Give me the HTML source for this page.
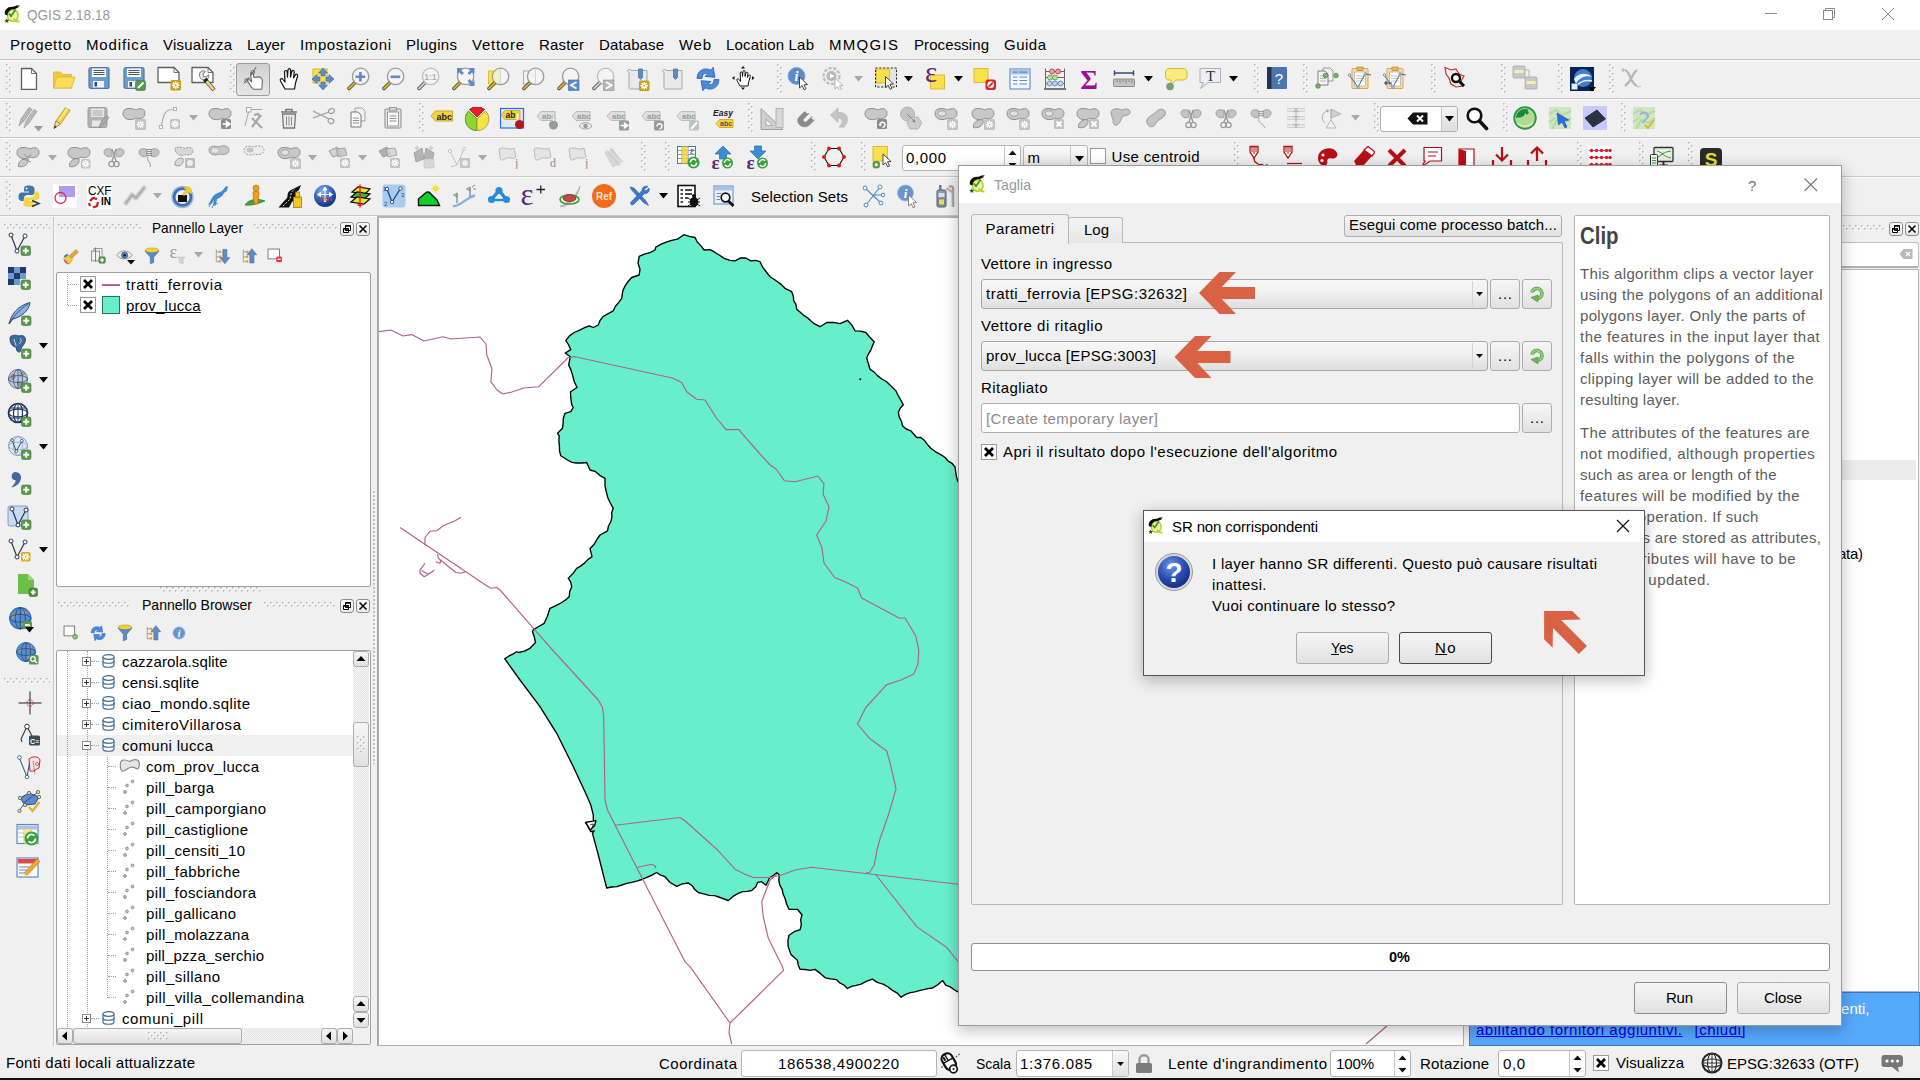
<!DOCTYPE html>
<html><head><meta charset="utf-8"><title>QGIS 2.18.18</title>
<style>
html,body{margin:0;padding:0;}
body{width:1920px;height:1080px;overflow:hidden;background:#f0f0f0;font-family:"Liberation Sans",sans-serif;position:relative;}
div,svg{position:absolute;box-sizing:border-box;}
.t{white-space:nowrap;}
.btn{border:1px solid #adadad;border-radius:3px;background:linear-gradient(#f6f6f6,#e1e1e1);}
.grip{background-image:radial-gradient(circle at 1px 1px,#c4c4c4 0.9px,transparent 1.1px),radial-gradient(circle at 3px 3px,#fff 0.9px,transparent 1.1px);background-size:4px 4px;}
</style></head><body>
<svg width="0" height="0" style="left:0;top:0"><defs><pattern id="gp" width="6" height="6" patternUnits="userSpaceOnUse"><rect x="1" y="1" width="1.500" height="1.500" fill="#fff"/><rect x="0" y="0" width="1.500" height="1.500" fill="#b2b2b2"/><rect x="4" y="4" width="1.500" height="1.500" fill="#fff"/><rect x="3" y="3" width="1.500" height="1.500" fill="#b2b2b2"/></pattern></defs></svg>

<div style="left:0px;top:0px;width:1920px;height:30px;background:#fff;"></div>
<svg style="left:3.5px;top:4.5px" width="16" height="18" viewBox="0 0 16 18"><ellipse cx="8.800" cy="10.500" rx="5.200" ry="5.800" fill="#f0f5a8" stroke="#b9d233" stroke-width="1.700"/><path d="M9.500 13.500 C11 15.500 13 17 15.500 16.500" fill="none" stroke="#b9d233" stroke-width="2"/><path d="M0.800 9.500 C0.300 4.500 4 1.200 9.500 1.800 L12.500 0.500 L15.500 0.300 L14.200 2.600 L10.500 4.300 C6.500 3.800 4 6 3.500 10.500 Z" fill="#0c0c0c"/><path d="M13.200 1 L15.600 0.200 L14.400 2.400 Z" fill="#3da32b"/><path d="M5.200 8.500 L7 11.300 L11.600 4.500" fill="none" stroke="#2e9a22" stroke-width="1.700"/><path d="M2.800 13.300 L3.600 15 L5.500 15.200 L4 16.300 L4.300 18 L2.800 17 L1.200 17.800 L1.700 16.200 L0.300 15.100 L2.100 15 Z" fill="#1d5a1a"/></svg>
<div class="t" style="left:27px;top:5px;font-size:15px;line-height:19px;height:19px;color:#999;transform:scaleX(0.9049);transform-origin:0 0;">QGIS 2.18.18</div>
<svg style="left:1760px;top:5px;" width="140" height="20" viewBox="0 0 140 20">
<path d="M5 8.5 H17" stroke="#8a8a8a" stroke-width="1"/>
<rect x="63.5" y="5.500" width="9" height="9" fill="#fff" stroke="#8a8a8a" stroke-width="1"/>
<path d="M65.5 5.500 V3.500 H74.500 V12.500 H72.500" fill="none" stroke="#8a8a8a" stroke-width="1"/>
<path d="M122 3 L134 15 M134 3 L122 15" stroke="#8a8a8a" stroke-width="1"/>
</svg>
<div style="left:0px;top:30px;width:1920px;height:30px;background:#f0f0f0;border-bottom:1px solid #c2c2c2;"></div>
<div style="left:0px;top:60px;width:1920px;height:1px;background:#fbfbfb;"></div>
<div class="t" style="left:10px;top:35px;font-size:15px;line-height:19px;height:19px;color:#000;letter-spacing:0.614px;">Progetto</div>
<div class="t" style="left:86px;top:35px;font-size:15px;line-height:19px;height:19px;color:#000;letter-spacing:0.878px;">Modifica</div>
<div class="t" style="left:163px;top:35px;font-size:15px;line-height:19px;height:19px;color:#000;letter-spacing:0.193px;">Visualizza</div>
<div class="t" style="left:247px;top:35px;font-size:15px;line-height:19px;height:19px;color:#000;letter-spacing:0.119px;">Layer</div>
<div class="t" style="left:300px;top:35px;font-size:15px;line-height:19px;height:19px;color:#000;letter-spacing:0.618px;">Impostazioni</div>
<div class="t" style="left:406px;top:35px;font-size:15px;line-height:19px;height:19px;color:#000;letter-spacing:0.300px;">Plugins</div>
<div class="t" style="left:472px;top:35px;font-size:15px;line-height:19px;height:19px;color:#000;letter-spacing:0.744px;">Vettore</div>
<div class="t" style="left:539px;top:35px;font-size:15px;line-height:19px;height:19px;color:#000;letter-spacing:0.164px;">Raster</div>
<div class="t" style="left:599px;top:35px;font-size:15px;line-height:19px;height:19px;color:#000;letter-spacing:0.113px;">Database</div>
<div class="t" style="left:679px;top:35px;font-size:15px;line-height:19px;height:19px;color:#000;letter-spacing:0.714px;">Web</div>
<div class="t" style="left:726px;top:35px;font-size:15px;line-height:19px;height:19px;color:#000;letter-spacing:0.190px;">Location Lab</div>
<div class="t" style="left:829px;top:35px;font-size:15px;line-height:19px;height:19px;color:#000;letter-spacing:1.300px;">MMQGIS</div>
<div class="t" style="left:914px;top:35px;font-size:15px;line-height:19px;height:19px;color:#000;letter-spacing:0.089px;">Processing</div>
<div class="t" style="left:1004px;top:35px;font-size:15px;line-height:19px;height:19px;color:#000;letter-spacing:0.493px;">Guida</div>
<div style="left:0px;top:98px;width:1920px;height:2px;background:#fbfbfb;border-top:1px solid #c9c9c9;"></div>
<div style="left:0px;top:137px;width:1920px;height:2px;background:#fbfbfb;border-top:1px solid #c9c9c9;"></div>
<div style="left:0px;top:176px;width:1920px;height:2px;background:#fbfbfb;border-top:1px solid #c9c9c9;"></div>
<div style="left:0px;top:215px;width:1920px;height:2px;background:#fbfbfb;border-top:1px solid #c9c9c9;"></div>
<div style="left:53px;top:217px;width:1px;height:829px;background:#c4c4c4;"></div>
<div style="left:54px;top:217px;width:1px;height:829px;background:#fbfbfb;"></div>
<svg style="left:4px;top:224px" width="46" height="6"><rect width="46" height="6" fill="url(#gp)"/></svg>
<svg style="left:4px;top:678px" width="46" height="6"><rect width="46" height="6" fill="url(#gp)"/></svg>
<svg style="left:58px;top:224px" width="83" height="6"><rect width="83" height="6" fill="url(#gp)"/></svg>
<svg style="left:254px;top:224px" width="83" height="6"><rect width="83" height="6" fill="url(#gp)"/></svg>
<div class="t" style="left:152px;top:218px;font-size:15px;line-height:19px;height:19px;color:#000;transform:scaleX(0.9093);transform-origin:0 0;">Pannello Layer</div>
<div style="left:340px;top:222px;width:14px;height:14px;background:linear-gradient(#fbfbfb,#e8e8e8);border:1px solid #8c8c8c;border-radius:3px;"></div>
<svg style="left:340px;top:222px;" width="14" height="14" viewBox="0 0 14 14"><path d="M5.500 3.500 H10.500 V8.500 H5.500 Z M3.500 6.500 H8.500 V10.500 H3.500 Z" fill="#fff" stroke="#000" stroke-width="1"/><path d="M5.500 4 H10.500 M3.500 7 H8.500" stroke="#000" stroke-width="1.6"/></svg>
<div style="left:356px;top:222px;width:14px;height:14px;background:linear-gradient(#fbfbfb,#e8e8e8);border:1px solid #8c8c8c;border-radius:3px;"></div>
<svg style="left:356px;top:222px;" width="14" height="14" viewBox="0 0 14 14"><path d="M3.500 3.500 L10.500 10.500 M10.500 3.500 L3.500 10.500" stroke="#000" stroke-width="1.500"/></svg>
<div style="left:56px;top:272px;width:315px;height:315px;background:#fff;border:1px solid #a0a0a0;border-radius:2px;"></div>
<div style="left:67px;top:274px;width:1px;height:31px;border-left:1px dotted #a0a0a0;"></div>
<div style="left:68px;top:284px;width:9px;height:1px;border-top:1px dotted #a0a0a0;"></div>
<div style="left:68px;top:305px;width:9px;height:1px;border-top:1px dotted #a0a0a0;"></div>
<div style="left:80px;top:276px;width:16px;height:16px;background:#fff;border:1px solid #9a9a9a;"></div>
<svg style="left:80px;top:276px;" width="16" height="16" viewBox="0 0 16 16"><path d="M4 4 L12 12 M12 4 L4 12" stroke="#000" stroke-width="2.8"/></svg>
<div style="left:80px;top:297px;width:16px;height:16px;background:#fff;border:1px solid #9a9a9a;"></div>
<svg style="left:80px;top:297px;" width="16" height="16" viewBox="0 0 16 16"><path d="M4 4 L12 12 M12 4 L4 12" stroke="#000" stroke-width="2.8"/></svg>
<div style="left:102px;top:284px;width:18px;height:1px;background:#b5638f;height:1.5px;"></div>
<div style="left:102px;top:296px;width:18px;height:18px;background:#67efcb;border:1px solid #27705c;"></div>
<div class="t" style="left:126px;top:275px;font-size:15px;line-height:19px;height:19px;color:#000;letter-spacing:0.605px;">tratti_ferrovia</div>
<div class="t" style="left:126px;top:296px;font-size:15px;line-height:19px;height:19px;color:#000;text-decoration:underline;letter-spacing:0.218px;">prov_lucca</div>
<svg style="left:160px;top:587px" width="102" height="6"><rect width="102" height="6" fill="url(#gp)"/></svg>
<svg style="left:58px;top:602px" width="71" height="6"><rect width="71" height="6" fill="url(#gp)"/></svg>
<svg style="left:264px;top:602px" width="72" height="6"><rect width="72" height="6" fill="url(#gp)"/></svg>
<div class="t" style="left:142px;top:595px;font-size:15px;line-height:19px;height:19px;color:#000;transform:scaleX(0.9357);transform-origin:0 0;">Pannello Browser</div>
<div style="left:340px;top:599px;width:14px;height:14px;background:linear-gradient(#fbfbfb,#e8e8e8);border:1px solid #8c8c8c;border-radius:3px;"></div>
<svg style="left:340px;top:599px;" width="14" height="14" viewBox="0 0 14 14"><path d="M5.500 3.500 H10.500 V8.500 H5.500 Z M3.500 6.500 H8.500 V10.500 H3.500 Z" fill="#fff" stroke="#000" stroke-width="1"/><path d="M5.500 4 H10.500 M3.500 7 H8.500" stroke="#000" stroke-width="1.6"/></svg>
<div style="left:356px;top:599px;width:14px;height:14px;background:linear-gradient(#fbfbfb,#e8e8e8);border:1px solid #8c8c8c;border-radius:3px;"></div>
<svg style="left:356px;top:599px;" width="14" height="14" viewBox="0 0 14 14"><path d="M3.500 3.500 L10.500 10.500 M10.500 3.500 L3.500 10.500" stroke="#000" stroke-width="1.500"/></svg>
<div style="left:56px;top:650px;width:315px;height:395px;background:#fff;border:1px solid #a0a0a0;border-radius:2px;"></div>
<div style="left:57px;top:735px;width:296px;height:21px;background:#f0f0f0;"></div>
<div style="left:67px;top:651px;width:1px;height:378px;border-left:1px dotted #a0a0a0;"></div>
<div style="left:87px;top:651px;width:1px;height:378px;border-left:1px dotted #a0a0a0;"></div>
<div style="left:107px;top:757px;width:1px;height:241px;border-left:1px dotted #a0a0a0;"></div>
<div style="left:91px;top:661px;width:8px;height:1px;border-top:1px dotted #a0a0a0;"></div>
<svg style="left:82px;top:657px;" width="9" height="9" viewBox="0 0 9 9"><rect x="0.500" y="0.500" width="8" height="8" fill="#fff" stroke="#8c8c8c"/><path d="M2 4.500 H7 M4.500 2 V7" stroke="#333" stroke-width="1"/></svg>
<svg style="left:102px;top:654px;" width="13" height="14" viewBox="0 0 13 14"><path d="M1 3 V11 C1 14 12 14 12 11 V3" fill="#fff" stroke="#3f6f96" stroke-width="1.200"/><ellipse cx="6.500" cy="3" rx="5.500" ry="2.300" fill="#fff" stroke="#3f6f96" stroke-width="1.200"/><path d="M1 7 C1 10 12 10 12 7" fill="none" stroke="#3f6f96" stroke-width="1.200"/></svg>
<div class="t" style="left:122px;top:652px;font-size:15px;line-height:19px;height:19px;color:#000;letter-spacing:0.141px;">cazzarola.sqlite</div>
<div style="left:91px;top:682px;width:8px;height:1px;border-top:1px dotted #a0a0a0;"></div>
<svg style="left:82px;top:678px;" width="9" height="9" viewBox="0 0 9 9"><rect x="0.500" y="0.500" width="8" height="8" fill="#fff" stroke="#8c8c8c"/><path d="M2 4.500 H7 M4.500 2 V7" stroke="#333" stroke-width="1"/></svg>
<svg style="left:102px;top:675px;" width="13" height="14" viewBox="0 0 13 14"><path d="M1 3 V11 C1 14 12 14 12 11 V3" fill="#fff" stroke="#3f6f96" stroke-width="1.200"/><ellipse cx="6.500" cy="3" rx="5.500" ry="2.300" fill="#fff" stroke="#3f6f96" stroke-width="1.200"/><path d="M1 7 C1 10 12 10 12 7" fill="none" stroke="#3f6f96" stroke-width="1.200"/></svg>
<div class="t" style="left:122px;top:673px;font-size:15px;line-height:19px;height:19px;color:#000;letter-spacing:0.254px;">censi.sqlite</div>
<div style="left:91px;top:703px;width:8px;height:1px;border-top:1px dotted #a0a0a0;"></div>
<svg style="left:82px;top:699px;" width="9" height="9" viewBox="0 0 9 9"><rect x="0.500" y="0.500" width="8" height="8" fill="#fff" stroke="#8c8c8c"/><path d="M2 4.500 H7 M4.500 2 V7" stroke="#333" stroke-width="1"/></svg>
<svg style="left:102px;top:696px;" width="13" height="14" viewBox="0 0 13 14"><path d="M1 3 V11 C1 14 12 14 12 11 V3" fill="#fff" stroke="#3f6f96" stroke-width="1.200"/><ellipse cx="6.500" cy="3" rx="5.500" ry="2.300" fill="#fff" stroke="#3f6f96" stroke-width="1.200"/><path d="M1 7 C1 10 12 10 12 7" fill="none" stroke="#3f6f96" stroke-width="1.200"/></svg>
<div class="t" style="left:122px;top:694px;font-size:15px;line-height:19px;height:19px;color:#000;letter-spacing:0.443px;">ciao_mondo.sqlite</div>
<div style="left:91px;top:724px;width:8px;height:1px;border-top:1px dotted #a0a0a0;"></div>
<svg style="left:82px;top:720px;" width="9" height="9" viewBox="0 0 9 9"><rect x="0.500" y="0.500" width="8" height="8" fill="#fff" stroke="#8c8c8c"/><path d="M2 4.500 H7 M4.500 2 V7" stroke="#333" stroke-width="1"/></svg>
<svg style="left:102px;top:717px;" width="13" height="14" viewBox="0 0 13 14"><path d="M1 3 V11 C1 14 12 14 12 11 V3" fill="#fff" stroke="#3f6f96" stroke-width="1.200"/><ellipse cx="6.500" cy="3" rx="5.500" ry="2.300" fill="#fff" stroke="#3f6f96" stroke-width="1.200"/><path d="M1 7 C1 10 12 10 12 7" fill="none" stroke="#3f6f96" stroke-width="1.200"/></svg>
<div class="t" style="left:122px;top:715px;font-size:15px;line-height:19px;height:19px;color:#000;letter-spacing:0.577px;">cimiteroVillarosa</div>
<div style="left:91px;top:745px;width:8px;height:1px;border-top:1px dotted #a0a0a0;"></div>
<svg style="left:82px;top:741px;" width="9" height="9" viewBox="0 0 9 9"><rect x="0.500" y="0.500" width="8" height="8" fill="#fff" stroke="#8c8c8c"/><path d="M2 4.500 H7" stroke="#333" stroke-width="1"/></svg>
<svg style="left:102px;top:738px;" width="13" height="14" viewBox="0 0 13 14"><path d="M1 3 V11 C1 14 12 14 12 11 V3" fill="#fff" stroke="#3f6f96" stroke-width="1.200"/><ellipse cx="6.500" cy="3" rx="5.500" ry="2.300" fill="#fff" stroke="#3f6f96" stroke-width="1.200"/><path d="M1 7 C1 10 12 10 12 7" fill="none" stroke="#3f6f96" stroke-width="1.200"/></svg>
<div class="t" style="left:122px;top:736px;font-size:15px;line-height:19px;height:19px;color:#000;letter-spacing:0.315px;">comuni lucca</div>
<div style="left:108px;top:766px;width:8px;height:1px;border-top:1px dotted #a0a0a0;"></div>
<svg style="left:119px;top:758px;" width="22" height="16" viewBox="0 0 22 16"><path d="M1.500 5 C2 1 7 1.500 10.500 3.500 C14 1.500 19 0.500 20 4 C21 8 19.500 11 18 11 C15 8.500 12 8.500 9 10.500 C6 12.500 3.500 14 2.500 12.500 C1 10 1 8 1.500 5 Z" fill="#e6e6e6" stroke="#8a8a8a" stroke-width="1.200"/></svg>
<div class="t" style="left:146px;top:757px;font-size:15px;line-height:19px;height:19px;color:#000;letter-spacing:0.291px;">com_prov_lucca</div>
<div style="left:108px;top:787px;width:8px;height:1px;border-top:1px dotted #a0a0a0;"></div>
<svg style="left:122px;top:779px;" width="14" height="16" viewBox="0 0 14 16"><circle cx="10.500" cy="2.500" r="1.400" fill="#ccc" stroke="#888" stroke-width="0.900"/><circle cx="5" cy="6.500" r="1.400" fill="#ccc" stroke="#888" stroke-width="0.900"/><circle cx="3" cy="13" r="1.400" fill="#ccc" stroke="#888" stroke-width="0.900"/></svg>
<div class="t" style="left:146px;top:778px;font-size:15px;line-height:19px;height:19px;color:#000;letter-spacing:0.328px;">pill_barga</div>
<div style="left:108px;top:808px;width:8px;height:1px;border-top:1px dotted #a0a0a0;"></div>
<svg style="left:122px;top:800px;" width="14" height="16" viewBox="0 0 14 16"><circle cx="10.500" cy="2.500" r="1.400" fill="#ccc" stroke="#888" stroke-width="0.900"/><circle cx="5" cy="6.500" r="1.400" fill="#ccc" stroke="#888" stroke-width="0.900"/><circle cx="3" cy="13" r="1.400" fill="#ccc" stroke="#888" stroke-width="0.900"/></svg>
<div class="t" style="left:146px;top:799px;font-size:15px;line-height:19px;height:19px;color:#000;letter-spacing:0.440px;">pill_camporgiano</div>
<div style="left:108px;top:829px;width:8px;height:1px;border-top:1px dotted #a0a0a0;"></div>
<svg style="left:122px;top:821px;" width="14" height="16" viewBox="0 0 14 16"><circle cx="10.500" cy="2.500" r="1.400" fill="#ccc" stroke="#888" stroke-width="0.900"/><circle cx="5" cy="6.500" r="1.400" fill="#ccc" stroke="#888" stroke-width="0.900"/><circle cx="3" cy="13" r="1.400" fill="#ccc" stroke="#888" stroke-width="0.900"/></svg>
<div class="t" style="left:146px;top:820px;font-size:15px;line-height:19px;height:19px;color:#000;letter-spacing:0.296px;">pill_castiglione</div>
<div style="left:108px;top:850px;width:8px;height:1px;border-top:1px dotted #a0a0a0;"></div>
<svg style="left:122px;top:842px;" width="14" height="16" viewBox="0 0 14 16"><circle cx="10.500" cy="2.500" r="1.400" fill="#ccc" stroke="#888" stroke-width="0.900"/><circle cx="5" cy="6.500" r="1.400" fill="#ccc" stroke="#888" stroke-width="0.900"/><circle cx="3" cy="13" r="1.400" fill="#ccc" stroke="#888" stroke-width="0.900"/></svg>
<div class="t" style="left:146px;top:841px;font-size:15px;line-height:19px;height:19px;color:#000;letter-spacing:0.341px;">pill_censiti_10</div>
<div style="left:108px;top:871px;width:8px;height:1px;border-top:1px dotted #a0a0a0;"></div>
<svg style="left:122px;top:863px;" width="14" height="16" viewBox="0 0 14 16"><circle cx="10.500" cy="2.500" r="1.400" fill="#ccc" stroke="#888" stroke-width="0.900"/><circle cx="5" cy="6.500" r="1.400" fill="#ccc" stroke="#888" stroke-width="0.900"/><circle cx="3" cy="13" r="1.400" fill="#ccc" stroke="#888" stroke-width="0.900"/></svg>
<div class="t" style="left:146px;top:862px;font-size:15px;line-height:19px;height:19px;color:#000;letter-spacing:0.432px;">pill_fabbriche</div>
<div style="left:108px;top:892px;width:8px;height:1px;border-top:1px dotted #a0a0a0;"></div>
<svg style="left:122px;top:884px;" width="14" height="16" viewBox="0 0 14 16"><circle cx="10.500" cy="2.500" r="1.400" fill="#ccc" stroke="#888" stroke-width="0.900"/><circle cx="5" cy="6.500" r="1.400" fill="#ccc" stroke="#888" stroke-width="0.900"/><circle cx="3" cy="13" r="1.400" fill="#ccc" stroke="#888" stroke-width="0.900"/></svg>
<div class="t" style="left:146px;top:883px;font-size:15px;line-height:19px;height:19px;color:#000;letter-spacing:0.385px;">pill_fosciandora</div>
<div style="left:108px;top:913px;width:8px;height:1px;border-top:1px dotted #a0a0a0;"></div>
<svg style="left:122px;top:905px;" width="14" height="16" viewBox="0 0 14 16"><circle cx="10.500" cy="2.500" r="1.400" fill="#ccc" stroke="#888" stroke-width="0.900"/><circle cx="5" cy="6.500" r="1.400" fill="#ccc" stroke="#888" stroke-width="0.900"/><circle cx="3" cy="13" r="1.400" fill="#ccc" stroke="#888" stroke-width="0.900"/></svg>
<div class="t" style="left:146px;top:904px;font-size:15px;line-height:19px;height:19px;color:#000;letter-spacing:0.316px;">pill_gallicano</div>
<div style="left:108px;top:934px;width:8px;height:1px;border-top:1px dotted #a0a0a0;"></div>
<svg style="left:122px;top:926px;" width="14" height="16" viewBox="0 0 14 16"><circle cx="10.500" cy="2.500" r="1.400" fill="#ccc" stroke="#888" stroke-width="0.900"/><circle cx="5" cy="6.500" r="1.400" fill="#ccc" stroke="#888" stroke-width="0.900"/><circle cx="3" cy="13" r="1.400" fill="#ccc" stroke="#888" stroke-width="0.900"/></svg>
<div class="t" style="left:146px;top:925px;font-size:15px;line-height:19px;height:19px;color:#000;letter-spacing:0.291px;">pill_molazzana</div>
<div style="left:108px;top:955px;width:8px;height:1px;border-top:1px dotted #a0a0a0;"></div>
<svg style="left:122px;top:947px;" width="14" height="16" viewBox="0 0 14 16"><circle cx="10.500" cy="2.500" r="1.400" fill="#ccc" stroke="#888" stroke-width="0.900"/><circle cx="5" cy="6.500" r="1.400" fill="#ccc" stroke="#888" stroke-width="0.900"/><circle cx="3" cy="13" r="1.400" fill="#ccc" stroke="#888" stroke-width="0.900"/></svg>
<div class="t" style="left:146px;top:946px;font-size:15px;line-height:19px;height:19px;color:#000;letter-spacing:0.183px;">pill_pzza_serchio</div>
<div style="left:108px;top:976px;width:8px;height:1px;border-top:1px dotted #a0a0a0;"></div>
<svg style="left:122px;top:968px;" width="14" height="16" viewBox="0 0 14 16"><circle cx="10.500" cy="2.500" r="1.400" fill="#ccc" stroke="#888" stroke-width="0.900"/><circle cx="5" cy="6.500" r="1.400" fill="#ccc" stroke="#888" stroke-width="0.900"/><circle cx="3" cy="13" r="1.400" fill="#ccc" stroke="#888" stroke-width="0.900"/></svg>
<div class="t" style="left:146px;top:967px;font-size:15px;line-height:19px;height:19px;color:#000;letter-spacing:0.436px;">pill_sillano</div>
<div style="left:108px;top:997px;width:8px;height:1px;border-top:1px dotted #a0a0a0;"></div>
<svg style="left:122px;top:989px;" width="14" height="16" viewBox="0 0 14 16"><circle cx="10.500" cy="2.500" r="1.400" fill="#ccc" stroke="#888" stroke-width="0.900"/><circle cx="5" cy="6.500" r="1.400" fill="#ccc" stroke="#888" stroke-width="0.900"/><circle cx="3" cy="13" r="1.400" fill="#ccc" stroke="#888" stroke-width="0.900"/></svg>
<div class="t" style="left:146px;top:988px;font-size:15px;line-height:19px;height:19px;color:#000;letter-spacing:0.398px;">pill_villa_collemandina</div>
<div style="left:91px;top:1018px;width:8px;height:1px;border-top:1px dotted #a0a0a0;"></div>
<svg style="left:82px;top:1014px;" width="9" height="9" viewBox="0 0 9 9"><rect x="0.500" y="0.500" width="8" height="8" fill="#fff" stroke="#8c8c8c"/><path d="M2 4.500 H7 M4.500 2 V7" stroke="#333" stroke-width="1"/></svg>
<svg style="left:102px;top:1011px;" width="13" height="14" viewBox="0 0 13 14"><path d="M1 3 V11 C1 14 12 14 12 11 V3" fill="#fff" stroke="#3f6f96" stroke-width="1.200"/><ellipse cx="6.500" cy="3" rx="5.500" ry="2.300" fill="#fff" stroke="#3f6f96" stroke-width="1.200"/><path d="M1 7 C1 10 12 10 12 7" fill="none" stroke="#3f6f96" stroke-width="1.200"/></svg>
<div class="t" style="left:122px;top:1009px;font-size:15px;line-height:19px;height:19px;color:#000;letter-spacing:0.596px;">comuni_pill</div>
<div style="left:353px;top:651px;width:16px;height:345px;background:#e8e8e8;background-image:repeating-conic-gradient(#e2e2e2 0 25%,#f6f6f6 0 50%);background-size:2px 2px;"></div>
<div class="btn" style="left:353px;top:651px;width:16px;height:16px;"></div>
<svg style="left:353px;top:651px;" width="16" height="16" viewBox="0 0 16 16"><path d="M3.500 10 L8 5 L12.500 10 Z" fill="#000"/></svg>
<div class="btn" style="left:353px;top:996px;width:16px;height:16px;"></div>
<svg style="left:353px;top:996px;" width="16" height="16" viewBox="0 0 16 16"><path d="M3.500 10 L8 5 L12.500 10 Z" fill="#000"/></svg>
<div class="btn" style="left:353px;top:1012px;width:16px;height:16px;"></div>
<svg style="left:353px;top:1012px;" width="16" height="16" viewBox="0 0 16 16"><path d="M3.500 6 L8 11 L12.500 6 Z" fill="#000"/></svg>
<div style="left:353px;top:1028px;width:17px;height:16px;background:#f0f0f0;"></div>
<div class="btn" style="left:353px;top:722px;width:16px;height:45px;"></div>
<svg style="left:357px;top:736px" width="8" height="16"><rect width="8" height="16" fill="url(#gp)"/></svg>
<div style="left:57px;top:1028px;width:296px;height:16px;background:#e8e8e8;background-image:repeating-conic-gradient(#e2e2e2 0 25%,#f6f6f6 0 50%);background-size:2px 2px;"></div>
<div class="btn" style="left:57px;top:1028px;width:16px;height:16px;"></div>
<svg style="left:57px;top:1028px;" width="16" height="16" viewBox="0 0 16 16"><path d="M10 3.500 L5 8 L10 12.500 Z" fill="#000"/></svg>
<div class="btn" style="left:321px;top:1028px;width:16px;height:16px;"></div>
<svg style="left:321px;top:1028px;" width="16" height="16" viewBox="0 0 16 16"><path d="M10 3.500 L5 8 L10 12.500 Z" fill="#000"/></svg>
<div class="btn" style="left:337px;top:1028px;width:16px;height:16px;"></div>
<svg style="left:337px;top:1028px;" width="16" height="16" viewBox="0 0 16 16"><path d="M6 3.500 L11 8 L6 12.500 Z" fill="#000"/></svg>
<div class="btn" style="left:73px;top:1028px;width:169px;height:16px;"></div>
<svg style="left:148px;top:1032px" width="20" height="8"><rect width="20" height="8" fill="url(#gp)"/></svg>
<div class="grip" style="left:373px;top:491px;width:3px;height:273px;"></div>
<div style="left:0px;top:1046px;width:1920px;height:32px;background:#f0f0f0;"></div>
<div style="left:0px;top:1078px;width:1920px;height:2px;background:#111;"></div>
<div class="t" style="left:6px;top:1053px;font-size:15px;line-height:19px;height:19px;color:#000;letter-spacing:0.307px;">Fonti dati locali attualizzate</div>
<div class="t" style="left:659px;top:1054px;font-size:15px;line-height:19px;height:19px;color:#000;letter-spacing:0.513px;">Coordinata</div>
<div style="left:741px;top:1050px;width:196px;height:27px;background:#fff;border:1px solid #b4b4b4;border-radius:3px;"></div>
<div class="t" style="left:778px;top:1054px;font-size:15px;line-height:19px;height:19px;color:#000;letter-spacing:0.645px;">186538,4900220</div>
<div class="t" style="left:976px;top:1054px;font-size:15px;line-height:19px;height:19px;color:#000;transform:scaleX(0.9328);transform-origin:0 0;">Scala</div>
<div style="left:1016px;top:1050px;width:113px;height:27px;background:#fff;border:1px solid #b4b4b4;border-radius:3px;"></div>
<div style="left:1112px;top:1051px;width:16px;height:25px;background:linear-gradient(#f8f8f8,#e2e2e2);border-left:1px solid #c8c8c8;border-radius:0 3px 3px 0;"></div>
<div class="t" style="left:1020px;top:1054px;font-size:15px;line-height:19px;height:19px;color:#000;letter-spacing:0.659px;">1:376.085</div>
<svg style="left:1117px;top:1062px;" width="7" height="5" viewBox="0 0 7 5"><path d="M0 0 H7 L3.500 4 Z" fill="#111"/></svg>
<div class="t" style="left:1168px;top:1054px;font-size:15px;line-height:19px;height:19px;color:#000;letter-spacing:0.551px;">Lente d'ingrandimento</div>
<div style="left:1330px;top:1050px;width:81px;height:27px;background:#fff;border:1px solid #b4b4b4;border-radius:3px;"></div>
<div style="left:1394px;top:1051px;width:1px;height:25px;background:#c8c8c8;"></div>
<div class="t" style="left:1336px;top:1054px;font-size:15px;line-height:19px;height:19px;color:#000;letter-spacing:-0.121px;">100%</div>
<svg style="left:1398px;top:1055px;" width="9" height="18" viewBox="0 0 9 18"><path d="M0.500 5 L4.500 0.500 L8.500 5 Z M0.500 13 L4.500 17.500 L8.500 13 Z" fill="#111"/></svg>
<div class="t" style="left:1420px;top:1054px;font-size:15px;line-height:19px;height:19px;color:#000;letter-spacing:0.182px;">Rotazione</div>
<div style="left:1498px;top:1050px;width:88px;height:27px;background:#fff;border:1px solid #b4b4b4;border-radius:3px;"></div>
<div style="left:1569px;top:1051px;width:1px;height:25px;background:#c8c8c8;"></div>
<div class="t" style="left:1503px;top:1054px;font-size:15px;line-height:19px;height:19px;color:#000;letter-spacing:0.574px;">0,0</div>
<svg style="left:1573px;top:1055px;" width="9" height="18" viewBox="0 0 9 18"><path d="M0.500 5 L4.500 0.500 L8.500 5 Z M0.500 13 L4.500 17.500 L8.500 13 Z" fill="#111"/></svg>
<div style="left:1593px;top:1055px;width:16px;height:16px;background:#fff;border:1px solid #9a9a9a;"></div>
<svg style="left:1593px;top:1055px;" width="16" height="16" viewBox="0 0 16 16"><path d="M4 4 L12 12 M12 4 L4 12" stroke="#000" stroke-width="2.8"/></svg>
<div class="t" style="left:1616px;top:1053px;font-size:15px;line-height:19px;height:19px;color:#000;letter-spacing:0.082px;">Visualizza</div>
<div class="t" style="left:1727px;top:1054px;font-size:15px;line-height:19px;height:19px;color:#000;letter-spacing:0.019px;">EPSG:32633 (OTF)</div>
<div style="left:377px;top:216px;width:1087px;height:830px;background:#fff;border:1px solid #b0b0b0;border-top:2px solid #b4b4b4;border-left:2px solid #aaa;"></div>
<svg style="left:379px;top:218px;" width="1084" height="827" viewBox="0 0 1084 827"><polygon points="192.7,186.7 191.8,180.2 191.5,173.7 198.0,169.5 195.2,163.5 193.5,157.0 191.9,151.9 189.7,147.0 191.3,138.7 186.3,135.0 191.8,131.7 189.7,127.0 186.8,122.5 190.5,117.9 195.2,114.5 200.2,112.3 205.1,109.8 210.2,107.8 214.3,109.5 219.3,107.0 221.1,102.3 224.3,98.3 229.3,95.6 234.3,92.8 236.4,88.2 239.8,84.4 242.7,80.3 243.8,72.8 246.1,67.9 249.1,63.5 252.7,59.5 260.2,57.0 261.0,51.2 259.0,45.3 260.2,38.3 265.4,36.1 271.0,34.6 276.0,32.0 276.8,29.2 281.8,26.3 287.2,24.1 292.7,22.3 298.5,21.2 304.8,16.7 310.3,18.3 316.0,19.5 318.4,24.1 322.0,27.9 325.2,32.0 331.0,31.7 335.7,34.2 340.2,37.0 345.2,40.4 351.0,42.3 356.0,42.8 361.8,39.8 366.8,40.0 371.8,42.8 376.5,42.4 381.0,43.7 383.8,49.4 387.7,54.5 391.0,58.7 395.0,61.3 398.9,64.0 402.7,66.9 406.0,70.3 412.7,73.7 414.3,78.0 414.7,82.6 417.0,86.7 417.7,91.2 421.3,94.3 424.9,97.4 428.8,100.0 432.3,103.3 436.0,106.2 441.0,108.7 447.7,104.5 454.4,104.3 461.0,105.7 468.5,102.3 472.9,107.1 476.0,112.8 481.5,113.1 486.8,114.5 490.8,119.3 495.2,123.7 493.4,127.9 491.8,132.1 489.4,136.1 487.7,140.3 489.4,145.7 491.0,151.2 495.2,154.1 498.7,157.9 502.8,161.0 507.3,163.5 511.0,167.0 516.8,172.8 519.2,177.5 521.8,182.1 524.3,186.7 521.2,190.2 519.3,194.5 520.3,199.1 522.5,203.3 523.5,207.8 527.2,211.0 531.8,212.8 537.7,219.5 541.8,219.5 545.6,222.6 548.6,226.6 551.8,230.3 556.6,233.8 561.8,236.6 565.8,239.2 568.9,242.8 573.0,245.3 576.0,249.0 576.7,254.0 577.5,258.9 579.0,263.7 721.0,263.7 721.0,774.0 579.5,774.2 575.3,771.8 571.2,768.9 566.6,767.2 563.8,762.6 558.9,766.6 553.6,770.0 549.1,770.6 544.7,771.7 540.3,772.6 535.9,773.8 531.4,774.6 526.5,776.4 522.1,779.2 518.3,775.2 513.4,772.4 509.1,769.0 504.0,766.1 498.3,764.4 493.4,761.1 487.3,763.4 481.4,766.3 477.0,767.4 472.5,768.3 468.4,770.5 465.1,767.1 460.8,764.9 457.3,761.6 451.7,760.9 446.2,759.8 441.3,755.4 436.0,751.4 431.1,752.3 426.1,751.5 421.2,751.4 419.2,747.0 418.4,742.2 412.0,736.6 409.1,728.3 408.9,722.7 410.0,717.2 415.2,713.7 421.2,711.6 422.3,706.7 421.7,701.7 423.0,696.8 418.4,691.3 410.0,691.3 407.6,686.0 406.0,680.3 404.1,676.0 403.2,671.3 400.8,667.2 399.8,662.1 400.3,657.0 398.0,654.6 394.4,657.3 390.6,659.8 387.0,667.2 382.7,663.7 378.6,664.4 376.8,668.7 372.7,672.5 368.2,673.3 363.6,673.7 359.3,675.3 354.0,678.4 349.3,682.5 341.0,679.5 335.7,677.6 330.1,677.4 324.7,675.9 319.3,674.5 315.8,671.5 313.1,667.7 309.3,665.0 303.3,665.9 297.7,668.3 291.0,664.5 286.0,658.7 281.6,657.2 277.7,654.5 272.9,657.2 267.9,659.3 262.9,661.5 257.7,663.2 252.7,664.4 247.7,665.3 242.8,667.0 237.9,668.6 232.7,669.0 227.7,670.0 219.3,637.0 213.5,615.3 215.2,612.8 211.8,613.7 206.5,604.5 216.0,603.7 214.3,602.0 214.3,597.0 211.8,587.0 206.0,573.7 194.3,548.7 177.7,515.3 161.0,488.7 141.0,462.0 125.7,440.7 129.6,438.2 133.8,436.1 137.7,433.7 139.3,434.5 145.4,433.2 151.0,430.3 156.5,424.5 155.3,419.0 153.5,413.7 154.3,411.7 159.8,408.5 165.2,405.3 168.2,398.7 171.0,390.3 176.9,387.6 182.7,384.5 186.6,381.9 190.2,378.7 190.7,373.5 192.7,368.7 191.7,364.2 189.3,360.3 193.9,355.6 197.7,350.3 201.9,347.9 205.7,344.9 209.1,341.4 213.0,338.7 211.0,330.7 215.2,326.2 217.9,321.5 221.0,317.0 228.5,312.8 229.5,308.0 231.8,303.7 232.9,299.3 232.7,294.6 234.3,290.3 231.0,284.5 228.6,279.2 227.2,273.5 226.0,267.8 226.0,260.3 220.7,257.3 216.0,253.3 211.0,252.0 207.7,244.5 202.7,245.0 197.7,245.0 192.9,244.3 188.5,242.0 181.8,237.8 180.5,232.9 180.4,227.9 179.9,222.9 180.2,217.8 178.5,215.3 183.5,210.3 184.1,205.3 184.3,200.2 186.0,195.3 191.8,193.7 194.3,189.5" fill="#67efcb" stroke="#000" stroke-width="1.350" stroke-linejoin="round"/><polyline points="0.0,113.7 12.0,112.0 24.0,118.0 32.7,116.6 45.0,123.0 64.0,118.7 72.0,121.0 101.0,119.0 107.0,126.0 107.7,136.6 113.0,151.0 111.8,163.7 118.0,172.0 124.0,176.0 132.7,174.0 145.0,170.0 159.8,168.7 189.3,139.5 196.0,138.7 294.3,160.3 302.7,164.5 307.7,173.7 317.7,181.2 326.0,182.0 336.8,199.0 347.0,211.6 359.8,211.6 374.0,228.0 391.0,247.0 397.0,251.0 405.6,262.8 416.0,263.7 439.0,258.0 445.0,265.8 444.0,276.0 450.0,288.7 447.0,303.0 437.7,317.0 443.0,330.0 445.0,345.0 455.6,359.5 466.0,363.7 478.5,370.0 482.7,380.0 520.0,400.0 526.0,400.0 536.8,418.0 539.8,432.0 539.0,446.0 534.8,456.0 522.0,462.0 507.7,466.6 486.8,489.5 478.5,506.0 491.0,520.8 507.7,533.0 511.8,547.8 517.0,570.8 509.8,595.8 501.0,620.8 498.0,632.0 495.3,646.8 490.6,654.2 487.0,655.0" fill="none" stroke="#b0608c" stroke-width="1.150" stroke-linejoin="round"/><polyline points="21.0,309.5 107.7,367.8 111.8,370.3 117.7,369.5 121.0,372.0 155.2,411.2 173.5,432.0 219.3,482.0 223.5,489.5 224.7,498.7 225.2,532.0 226.0,582.0 228.5,592.0 236.0,607.0 257.7,649.5 306.0,743.7 311.0,748.7 351.0,805.0 350.0,814.5 352.7,826.0" fill="none" stroke="#b0608c" stroke-width="1.150" stroke-linejoin="round"/><polyline points="236.0,607.3 301.0,599.5 306.0,602.8 337.7,631.2 356.0,651.2 366.0,656.2 374.3,659.5 391.0,659.5 402.7,657.0 416.0,652.0 432.3,649.2 488.8,655.7 579.5,666.3 721.0,682.0" fill="none" stroke="#b0608c" stroke-width="1.150" stroke-linejoin="round"/><polyline points="497.1,657.0 537.9,708.9 567.5,729.2 579.5,744.0 621.0,792.0" fill="none" stroke="#b0608c" stroke-width="1.150" stroke-linejoin="round"/><polyline points="397.7,656.2 391.0,662.0 382.7,683.7 384.3,698.7 389.3,720.3 403.5,748.7 404.5,752.4 351.0,805.0" fill="none" stroke="#b0608c" stroke-width="1.150" stroke-linejoin="round"/><polyline points="257.7,649.5 272.7,646.2 276.0,647.8 276.8,650.3" fill="none" stroke="#b0608c" stroke-width="1.150" stroke-linejoin="round"/><polyline points="81.8,299.5 76.0,302.8 64.3,307.8 57.7,312.8 51.0,313.3 46.0,319.5 46.0,326.2 47.5,327.5" fill="none" stroke="#b0608c" stroke-width="1.150" stroke-linejoin="round"/><polyline points="58.5,336.2 59.3,340.3 76.8,354.5 81.8,355.3 86.0,354.0" fill="none" stroke="#b0608c" stroke-width="1.150" stroke-linejoin="round"/><polyline points="56.8,343.7 61.0,345.3 61.8,342.0" fill="none" stroke="#b0608c" stroke-width="1.150" stroke-linejoin="round"/><polyline points="46.0,345.3 41.0,352.0 41.0,355.3 45.2,358.7 49.3,356.2 55.2,352.3" fill="none" stroke="#b0608c" stroke-width="1.150" stroke-linejoin="round"/><polyline points="42.5,352.5 49.3,356.2" fill="none" stroke="#b0608c" stroke-width="1.150" stroke-linejoin="round"/><polyline points="1041.0,782.0 1009.0,807.0 987.0,826.0" fill="none" stroke="#b0608c" stroke-width="1.150" stroke-linejoin="round"/><circle cx="481.3" cy="161.2" r="1" fill="#000"/><polygon points="206.8,604.3 217.0,602.6 215.6,607.5 211.3,612.0" fill="#fff" stroke="#000" stroke-width="1.300" stroke-linejoin="round"/><polyline points="211.5,606.5 214.5,606.0 213.0,610.0" fill="none" stroke="#000" stroke-width="0.800"/></svg>
<svg style="left:6px;top:64px" width="6" height="30"><rect width="6" height="30" fill="url(#gp)"/></svg>
<svg style="left:16px;top:66px" width="24" height="24" viewBox="0 0 24 24"><path d="M5.5 2.5 H15.5 L20.5 7.5 V23.5 H5.5 Z" fill="#fff" stroke="#606060" stroke-width="1.300" stroke-linejoin="round"/><path d="M15.5 2.5 V7.5 H20.5" fill="none" stroke="#555" stroke-width="0.800"/></svg>
<svg style="left:51.8px;top:66.5px" width="24" height="24" viewBox="0 0 24 24"><path d="M1.500 5 H8.500 L10.500 7.500 H19.500 V21 H1.500 Z" fill="#f0c93c" stroke="#d9b52a" stroke-width="0.800"/><path d="M1.500 21 L5 10 H23 L19.500 21 Z" fill="#fddc5c" stroke="#d9b52a" stroke-width="0.800"/></svg>
<svg style="left:86.5px;top:66px" width="24" height="24" viewBox="0 0 24 24"><rect x="2" y="1.500" width="20" height="21" rx="2" fill="#6e9bd0" stroke="#4f76a8" stroke-width="1.200"/><rect x="5" y="2.500" width="14" height="8.500" fill="#f6f6f6"/><path d="M6.500 4.500 H17.500 M6.500 6.500 H17.500 M6.500 8.500 H17.500" stroke="#555" stroke-width="1"/><rect x="6" y="15" width="11" height="6.500" fill="#f4f4f4"/><rect x="7.500" y="16" width="2.500" height="4.500" fill="#2c4a78"/></svg>
<svg style="left:121.5px;top:65.5px" width="25" height="25" viewBox="0 0 25 25"><rect x="2" y="1.500" width="20" height="21" rx="2" fill="#6e9bd0" stroke="#4f76a8" stroke-width="1.200"/><rect x="5" y="2.500" width="14" height="8.500" fill="#f6f6f6"/><path d="M6.500 4.500 H17.500 M6.500 6.500 H17.500 M6.500 8.500 H17.500" stroke="#555" stroke-width="1"/><rect x="6" y="15" width="11" height="6.500" fill="#f4f4f4"/><rect x="7.500" y="16" width="2.500" height="4.500" fill="#2c4a78"/><rect x="13.500" y="14.500" width="10" height="10" rx="2" fill="#4f9a4f" stroke="#3b7a3b" stroke-width="0.600"/><path d="M16 22 L21.500 16.500" stroke="#fff" stroke-width="2.200"/></svg>
<svg style="left:156.5px;top:65.5px" width="25" height="25" viewBox="0 0 25 25"><path d="M1 1.5 H17 L22 6.5 V16.5 H1 Z" fill="#fff" stroke="#606060" stroke-width="1.300" stroke-linejoin="round"/><path d="M17 1.5 V6.5 H22" fill="none" stroke="#555" stroke-width="0.800"/><rect x="13.5" y="14" width="10.5" height="10.5" rx="1.500" fill="#c9a21a"/><g transform="translate(18.75 19.25)" stroke="#fff" stroke-width="1.300"><path d="M0 -3.800 V3.800 M-3.800 0 H3.800 M-2.700 -2.700 L2.700 2.700 M-2.700 2.700 L2.700 -2.700"/><circle r="1.300" fill="#c9a21a" stroke="#fff" stroke-width="1"/></g></svg>
<svg style="left:191px;top:65.5px" width="25" height="25" viewBox="0 0 25 25"><path d="M1 1.5 H17 L22 6.5 V16.5 H1 Z" fill="#fff" stroke="#606060" stroke-width="1.300" stroke-linejoin="round"/><path d="M17 1.5 V6.5 H22" fill="none" stroke="#555" stroke-width="0.800"/><g transform="translate(2 2.500)"><path d="M6.500 5.500 C7 2.500 10.500 1.500 12.500 3 L10 5 L10.500 8 L13.500 8.500 L15.500 6 C16.500 9 14.500 11.500 11.500 11.500 C8.500 11.500 6 9 6.500 5.500 Z" fill="#e4e4e4" stroke="#7a7a7a" stroke-width="1"/><path d="M12.500 11.500 L21 21.500" stroke="#6a5a2a" stroke-width="4.200"/><path d="M13.300 12.300 L20.500 21" stroke="#ead488" stroke-width="2.600"/><path d="M11.800 10.600 L13.600 12.800" stroke="#222" stroke-width="4.200"/></g></svg>
<svg style="left:230px;top:64px" width="6" height="30"><rect width="6" height="30" fill="url(#gp)"/></svg>
<div style="left:236px;top:63px;width:34px;height:33px;border:1px solid #9c9c9c;border-radius:3px;background:linear-gradient(#d0d0d0,#e6e6e6);"></div>
<svg style="left:240.5px;top:67px" width="24" height="24" viewBox="0 0 24 24"><g transform="translate(-0.500 -2.500) scale(1.180)"><path d="M9 19 L6 14 C5 12.500 7 11.500 8 13 L9.500 15 L8.500 8 C8.300 6.500 10.300 6.200 10.700 7.800 L11.500 11 L14.500 10.500 C17 10.500 19 12 18.500 15 L18 21 H11 Z" fill="#fff" stroke="#666" stroke-width="0.900"/><path d="M14 1 L9 9 M7 11 L3 16" stroke="#555" stroke-width="0.800"/><circle cx="10.500" cy="6.500" r="1.500" fill="none" stroke="#666" stroke-width="0.700"/><circle cx="5" cy="13.500" r="1.500" fill="none" stroke="#666" stroke-width="0.700"/></g></svg>
<svg style="left:276.5px;top:67px" width="24" height="24" viewBox="0 0 24 24"><path d="M8 22 L3.500 14 C2.500 12 4.500 10.500 6 12.500 L8 15 L7.500 5 C7.500 3 10 3 10.200 5 L10.500 10 L11 3 C11.200 1 13.700 1.200 13.600 3.200 L13.500 10 L14.800 4.500 C15.300 2.800 17.500 3.300 17.200 5.200 L16.500 11 L18.300 8 C19.300 6.500 21.300 7.500 20.500 9.500 L18.500 16 L17.500 22 Z" fill="#fff" stroke="#111" stroke-width="1.200" stroke-linejoin="round"/></svg>
<svg style="left:311px;top:67px" width="24" height="24" viewBox="0 0 24 24"><rect x="2" y="2" width="14" height="14" fill="#fbe04d" stroke="#d9b52a" stroke-width="1"/><g fill="#5b8cc8" stroke="#3b6ca8" stroke-width="0.600"><path d="M12 1 L16.500 6 H14 V9 H10 V6 H7.500 Z"/><path d="M12 23 L16.500 18 H14 V15 H10 V18 H7.500 Z"/><path d="M1 12 L6 7.500 V10 H9 V14 H6 V16.500 Z"/><path d="M23 12 L18 7.500 V10 H15 V14 H18 V16.500 Z"/></g></svg>
<svg style="left:346px;top:67px" width="24" height="24" viewBox="0 0 24 24"><path d="M9.500 15 L3 21.500" stroke="#222" stroke-width="3.400" stroke-linecap="round"/><path d="M8.300 16.200 L3 21.500" stroke="#d9b52a" stroke-width="2.200" stroke-linecap="round"/><circle cx="14.600" cy="9.400" r="8.200" fill="#f4f4f4" stroke="#9a9a9a" stroke-width="1.300"/><path d="M14.400 5 V14.600 M9.600 9.800 H19.200" stroke="#5b8cc8" stroke-width="2.600"/></svg>
<svg style="left:381px;top:67px" width="24" height="24" viewBox="0 0 24 24"><path d="M9.500 15 L3 21.500" stroke="#222" stroke-width="3.400" stroke-linecap="round"/><path d="M8.300 16.200 L3 21.500" stroke="#d9b52a" stroke-width="2.200" stroke-linecap="round"/><circle cx="14.600" cy="9.400" r="8.200" fill="#f4f4f4" stroke="#9a9a9a" stroke-width="1.300"/><path d="M9.600 9.800 H19.200" stroke="#5b8cc8" stroke-width="2.600"/></svg>
<svg style="left:416px;top:67px" width="24" height="24" viewBox="0 0 24 24"><path d="M9.500 15 L3 21.500" stroke="#222" stroke-width="3.400" stroke-linecap="round"/><path d="M8.300 16.200 L3 21.500" stroke="#d0d0d0" stroke-width="2.200" stroke-linecap="round"/><circle cx="14.600" cy="9.400" r="8.200" fill="#f4f4f4" stroke="#bdbdbd" stroke-width="1.300"/><text x="14.400" y="13" text-anchor="middle" font-family="Liberation Sans,sans-serif" font-weight="bold" font-size="8.500" fill="#b0b0b0">1:1</text></svg>
<svg style="left:451px;top:67px" width="24" height="24" viewBox="0 0 24 24"><path d="M9.500 15 L3 21.500" stroke="#222" stroke-width="3.400" stroke-linecap="round"/><path d="M8.300 16.200 L3 21.500" stroke="#d9b52a" stroke-width="2.200" stroke-linecap="round"/><circle cx="14.600" cy="9.400" r="8.200" fill="#f4f4f4" stroke="#9a9a9a" stroke-width="1.300"/><g fill="#5b8cc8"><path d="M6 1 H12 L10 3 L13 6 L11 8 L8 5 L6 7 Z"/><path d="M23.500 1 H17.500 L19.500 3 L16.500 6 L18.500 8 L21.500 5 L23.500 7 Z"/><path d="M23.500 19 H17.500 L19.500 17 L16.500 14 L18.500 12 L21.500 15 L23.500 13 Z"/></g></svg>
<svg style="left:486px;top:67px" width="24" height="24" viewBox="0 0 24 24"><rect x="2.500" y="4" width="10" height="13" fill="#fbe04d" stroke="#d9b52a" stroke-width="0.800"/><path d="M9.500 15 L3 21.500" stroke="#222" stroke-width="3.400" stroke-linecap="round"/><path d="M8.300 16.200 L3 21.500" stroke="#d9b52a" stroke-width="2.200" stroke-linecap="round"/><circle cx="14.600" cy="9.400" r="8.200" fill="#f4f4f4" stroke="#9a9a9a" stroke-width="1.300"/><path d="M14.400 2.500 A7.300 7.300 0 0 0 14.400 17.100 Z" fill="#f4edc4" opacity="0.900"/><path d="M14.400 2.500 V17" stroke="#c8c8c8" stroke-width="0.800"/></svg>
<svg style="left:521px;top:67px" width="24" height="24" viewBox="0 0 24 24"><rect x="2.500" y="4" width="10" height="13" fill="#f2f2f2" stroke="#999" stroke-width="0.800"/><path d="M9.500 15 L3 21.500" stroke="#222" stroke-width="3.400" stroke-linecap="round"/><path d="M8.300 16.200 L3 21.500" stroke="#d9b52a" stroke-width="2.200" stroke-linecap="round"/><circle cx="14.600" cy="9.400" r="8.200" fill="#f4f4f4" stroke="#9a9a9a" stroke-width="1.300"/><path d="M14.400 2.500 V17" stroke="#c8c8c8" stroke-width="0.800"/></svg>
<svg style="left:556px;top:67px" width="24" height="24" viewBox="0 0 24 24"><path d="M9.500 15 L3 21.500" stroke="#222" stroke-width="3.400" stroke-linecap="round"/><path d="M8.300 16.200 L3 21.500" stroke="#d9b52a" stroke-width="2.200" stroke-linecap="round"/><circle cx="14.600" cy="9.400" r="8.200" fill="#f4f4f4" stroke="#9a9a9a" stroke-width="1.300"/><rect x="12.500" y="13" width="10.500" height="10.500" fill="#5b8cc8" stroke="#3b6ca8" stroke-width="0.600"/><path d="M20.500 15 L15 18.300 L20.500 21.600" fill="none" stroke="#fff" stroke-width="1.800"/></svg>
<svg style="left:591px;top:67px" width="24" height="24" viewBox="0 0 24 24"><path d="M9.500 15 L3 21.500" stroke="#222" stroke-width="3.400" stroke-linecap="round"/><path d="M8.300 16.200 L3 21.500" stroke="#d0d0d0" stroke-width="2.200" stroke-linecap="round"/><circle cx="14.600" cy="9.400" r="8.200" fill="#f4f4f4" stroke="#bdbdbd" stroke-width="1.300"/><rect x="12.500" y="13" width="10.500" height="10.500" fill="#b8b8b8" stroke="#909090" stroke-width="0.600"/><path d="M15 15 L20.500 18.300 L15 21.600" fill="none" stroke="#fff" stroke-width="1.800"/></svg>
<svg style="left:625.5px;top:66.5px" width="25" height="25" viewBox="0 0 25 25"><path d="M3 2.500 C1 2.500 1 5 3 5 V21 C3 22 4 22 5 22 H21 V3.500 H5 C5 2 3 2.500 3 2.500 Z" fill="#e9e9e9" stroke="#a8a8a8" stroke-width="1"/><path d="M12.500 2 H16.500 V10.500 L14.500 12.500 L12.500 10.500 Z" fill="#5b8cc8" stroke="#3b6ca8" stroke-width="0.700"/><rect x="13" y="13.5" width="10.5" height="10.5" rx="1.500" fill="#c9a21a"/><g transform="translate(18.25 18.75)" stroke="#fff" stroke-width="1.300"><path d="M0 -3.800 V3.800 M-3.800 0 H3.800 M-2.700 -2.700 L2.700 2.700 M-2.700 2.700 L2.700 -2.700"/><circle r="1.300" fill="#c9a21a" stroke="#fff" stroke-width="1"/></g></svg>
<svg style="left:661px;top:67px" width="24" height="24" viewBox="0 0 24 24"><path d="M3 2.500 C1 2.500 1 5 3 5 V21 C3 22 4 22 5 22 H21 V3.500 H5 C5 2 3 2.500 3 2.500 Z" fill="#e9e9e9" stroke="#a8a8a8" stroke-width="1"/><path d="M12.500 2 H16.500 V10.500 L14.500 12.500 L12.500 10.500 Z" fill="#5b8cc8" stroke="#3b6ca8" stroke-width="0.700"/></svg>
<svg style="left:696px;top:66.5px" width="24" height="24" viewBox="0 0 24 24"><g transform="translate(-1.800 -1.800) scale(1.150)"><path d="M2.500 11.500 C2.500 4.500 9 1.500 14.500 4.300 L16.500 1.800 L18 10.500 L9.300 9.800 L11.800 7.600 C9 6.300 6.800 8 6.800 11.500 Z" fill="#4a8ad8" stroke="#2f68b8" stroke-width="0.800"/><path d="M21.500 12.500 C21.500 19.500 15 22.500 9.500 19.700 L7.500 22.200 L6 13.500 L14.700 14.200 L12.200 16.400 C15 17.700 17.200 16 17.200 12.500 Z" fill="#4a8ad8" stroke="#2f68b8" stroke-width="0.800"/></g></svg>
<svg style="left:731px;top:66px" width="24" height="24" viewBox="0 0 24 24"><path d="M9 20 L6 14.500 C5.200 13 7 12 8 13.500 L9.500 15.500 L9.200 7 C9.200 5.500 11.200 5.500 11.300 7 L11.500 10.500 L12 5.500 C12.200 4 14.200 4.200 14.100 5.700 L14 10.500 L15 7 C15.500 5.700 17.300 6.200 17 7.700 L16.300 11.500 L17.500 9.500 C18.300 8.300 20 9.300 19.300 10.700 L17.800 15.500 L17 20 Z" fill="#fff" stroke="#111" stroke-width="1" stroke-linejoin="round"/><path d="M12 0 L14 2.500 H10 Z M12 24 L14 21.500 H10 Z M1 12 L3.500 10 V14 Z M23.500 12 L21 10 V14 Z" fill="#111"/></svg>
<svg style="left:777px;top:64px" width="6" height="30"><rect width="6" height="30" fill="url(#gp)"/></svg>
<svg style="left:787px;top:66px" width="24" height="24" viewBox="0 0 24 24"><circle cx="9.500" cy="10" r="8.500" fill="#5b8cc8" stroke="#7fa6d8" stroke-width="0.800"/><text x="9.500" y="15" text-anchor="middle" font-family="Liberation Serif,serif" font-style="italic" font-weight="bold" font-size="14" fill="#fff">i</text><path d="M12.5 11 l0 11 l2.600 -2.400 l2 4.200 l1.900 -0.900 l-2 -4.100 l3.500 -0.300 Z" fill="#fff" stroke="#333" stroke-width="0.900"/></svg>
<svg style="left:822px;top:66px" width="24" height="24" viewBox="0 0 24 24"><circle cx="9.500" cy="10" r="8" fill="#ececec" stroke="#bdbdbd" stroke-width="2.200" stroke-dasharray="3.200 1.700"/><circle cx="9.500" cy="10" r="5" fill="#b9b9b9"/><path d="M8 7.500 L12.500 10 L8 12.500 Z" fill="#fff"/><path d="M13 12 l0 11 l2.600 -2.400 l2 4.200 l1.900 -0.900 l-2 -4.100 l3.500 -0.300 Z" fill="#fff" stroke="#aaa" stroke-width="0.900"/></svg>
<svg style="left:854px;top:75.5px" width="9" height="6"><path d="M0 0 H9 L4.500 5.500 Z" fill="#a8a8a8"/></svg>
<svg style="left:874px;top:66px" width="24" height="24" viewBox="0 0 24 24"><rect x="1.500" y="2" width="21" height="19" fill="#e4e4e4" stroke="#222" stroke-width="1" stroke-dasharray="2.200 1.600"/><rect x="2.500" y="3" width="13" height="14" fill="#fbe04d" stroke="#d9b52a" stroke-width="0.800"/><path d="M11.5 10.5 l0 11 l2.600 -2.400 l2 4.200 l1.900 -0.900 l-2 -4.100 l3.500 -0.300 Z" fill="#fff" stroke="#333" stroke-width="0.900"/></svg>
<svg style="left:904px;top:75.5px" width="9" height="6"><path d="M0 0 H9 L4.500 5.500 Z" fill="#000"/></svg>
<svg style="left:923px;top:66px" width="24" height="24" viewBox="0 0 24 24"><rect x="7.500" y="9" width="14" height="14" fill="#fbe04d" stroke="#d9b52a" stroke-width="0.900"/><text x="2" y="16" font-family="Liberation Serif,serif" font-size="29" fill="#5a2a78">ε</text></svg>
<svg style="left:954px;top:75.5px" width="9" height="6"><path d="M0 0 H9 L4.500 5.500 Z" fill="#000"/></svg>
<svg style="left:973px;top:67px" width="24" height="24" viewBox="0 0 24 24"><rect x="1" y="1.500" width="14" height="14" fill="#fbe04d" stroke="#d9b52a" stroke-width="0.900"/><rect x="12.500" y="12.500" width="10.500" height="10.500" rx="2.500" fill="#d0262b"/><circle cx="17.700" cy="17.700" r="3.200" fill="#fff" stroke="#fff" stroke-width="0.500"/><path d="M15.600 19.800 L19.800 15.600" stroke="#d0262b" stroke-width="1.700"/></svg>
<svg style="left:1008px;top:67px" width="24" height="24" viewBox="0 0 24 24"><rect x="2" y="2" width="20" height="20" fill="#f4f8fd" stroke="#5b8cc8" stroke-width="1.100"/><rect x="3" y="3" width="18" height="4.500" fill="#a9c4e6"/><path d="M5 5.200 H9.500 M11.500 5.200 H19 M5 10 H9.500 M11.500 10 H19 M5 13.500 H9.500 M11.500 13.500 H19 M5 17 H9.500 M11.500 17 H19" stroke="#5b8cc8" stroke-width="1.200"/></svg>
<svg style="left:1042.5px;top:67px" width="24" height="24" viewBox="0 0 24 24"><path d="M2.500 1.500 V21 M21.500 1.500 V21 M2.500 4.500 H21.500 M2.500 10.500 H21.500 M2.500 16.500 H21.500" stroke="#666" stroke-width="1"/><rect x="1" y="21" width="22" height="2" fill="#777"/><g stroke-width="0.800"><circle cx="9" cy="4.500" r="2.500" fill="#f0a0a0" stroke="#c03030"/><circle cx="15" cy="4.500" r="2.500" fill="#f0a0a0" stroke="#c03030"/><circle cx="7" cy="10.500" r="2.500" fill="#b4e0a8" stroke="#4a9a3a"/><circle cx="12" cy="10.500" r="2.500" fill="#b4e0a8" stroke="#4a9a3a"/><circle cx="6.500" cy="16.500" r="2.500" fill="#b8d4f0" stroke="#4a7ebb"/><circle cx="12" cy="16.500" r="2.500" fill="#b8d4f0" stroke="#4a7ebb"/><circle cx="17.500" cy="16.500" r="2.500" fill="#b8d4f0" stroke="#4a7ebb"/></g></svg>
<svg style="left:1077px;top:67px" width="24" height="24" viewBox="0 0 24 24"><text x="12" y="22" text-anchor="middle" font-family="Liberation Serif,serif" font-weight="bold" font-size="27" fill="#9a0f9a">Σ</text></svg>
<svg style="left:1112px;top:67px" width="24" height="24" viewBox="0 0 24 24"><path d="M2.500 6 H21.500 M2.500 3.500 V8.500 M21.500 3.500 V8.500" stroke="#2e4d78" stroke-width="1.500"/><rect x="1.500" y="12" width="21" height="7.500" rx="1" fill="#c4c4c4" stroke="#8a8a8a" stroke-width="1"/><path d="M5 12.500 V15 M8 12.500 V16.500 M11 12.500 V15 M14 12.500 V16.500 M17 12.500 V15 M20 12.500 V16.500" stroke="#777" stroke-width="0.800"/></svg>
<svg style="left:1143.5px;top:75.5px" width="9" height="6"><path d="M0 0 H9 L4.500 5.500 Z" fill="#000"/></svg>
<svg style="left:1163.5px;top:67px" width="24" height="24" viewBox="0 0 24 24"><path d="M5 1.500 H19 C22 1.500 23 3.500 23 6 V9 C23 12 21 13 19 13 H12 L7 18 V13 H5 C2 13 1.500 11 1.500 9 V6 C1.500 3 3 1.500 5 1.500 Z" fill="#fbea7c" stroke="#d8b830" stroke-width="1"/><circle cx="6" cy="19.500" r="3.500" fill="#6aa86a" stroke="#8a8a8a" stroke-width="0.800"/></svg>
<svg style="left:1198px;top:67px" width="24" height="24" viewBox="0 0 24 24"><path d="M2 1.500 H22.500 V15.500 H10 L2.500 21.500 L5.500 15.500 H2 Z" fill="#eaf0f6" stroke="#a8a8a8" stroke-width="0.900"/><text x="12.500" y="13.500" text-anchor="middle" font-family="Liberation Serif,serif" font-size="15" fill="#333">T</text></svg>
<svg style="left:1229px;top:75.5px" width="9" height="6"><path d="M0 0 H9 L4.500 5.500 Z" fill="#000"/></svg>
<svg style="left:1254px;top:64px" width="6" height="30"><rect width="6" height="30" fill="url(#gp)"/></svg>
<svg style="left:1265px;top:66px" width="24" height="24" viewBox="0 0 24 24"><rect x="2" y="1" width="20" height="22" rx="1" fill="#4a76ad"/><rect x="2" y="1" width="4.500" height="22" fill="#23344d"/><text x="14" y="18" text-anchor="middle" font-family="Liberation Sans,sans-serif" font-size="15" fill="#fff">?</text></svg>
<svg style="left:1303px;top:64px" width="6" height="30"><rect width="6" height="30" fill="url(#gp)"/></svg>
<svg style="left:1314px;top:65px" width="26" height="26" viewBox="0 0 26 26"><path d="M9 3 H16 L19 6 V16 H9 Z" fill="#f0f0f0" stroke="#888" stroke-width="0.800"/><path d="M4 6 H11 L14 9 V20 H4 Z" fill="#f6f6f6" stroke="#666" stroke-width="0.800"/><path d="M6 11 H12 M6 13.500 H12 M6 16 H12" stroke="#999" stroke-width="0.700"/><circle cx="11.500" cy="10.500" r="2.300" fill="#7ab36a" stroke="#4a7a3a" stroke-width="0.700"/><circle cx="22" cy="10.500" r="2.300" fill="#7ab36a" stroke="#4a7a3a" stroke-width="0.700"/><circle cx="4" cy="21" r="2.300" fill="#7ab36a" stroke="#4a7a3a" stroke-width="0.700"/></svg>
<svg style="left:1348px;top:66px" width="24" height="24" viewBox="0 0 24 24"><rect x="4" y="2.500" width="16" height="20" rx="1" fill="#f8dcb0" stroke="#d9a44a" stroke-width="1"/><rect x="6.500" y="6" width="11" height="14" fill="#fff" stroke="#999" stroke-width="0.600"/><rect x="9" y="1" width="6" height="3.500" fill="#e8b868" stroke="#b88428" stroke-width="0.700"/><path d="M8 10 H16 M8 12.500 H16 M8 15 H16" stroke="#aaa" stroke-width="0.700"/><path d="M1 9 L10 21 L17 8 L23 9" fill="none" stroke="#3b6ca8" stroke-width="1"/><circle cx="1.500" cy="9" r="1.200" fill="#fff" stroke="#3b6ca8" stroke-width="0.700"/><circle cx="10" cy="21" r="1.200" fill="#fff" stroke="#3b6ca8" stroke-width="0.700"/><circle cx="17" cy="8" r="1.200" fill="#fff" stroke="#3b6ca8" stroke-width="0.700"/></svg>
<svg style="left:1383px;top:66px" width="24" height="24" viewBox="0 0 24 24"><rect x="4" y="2.500" width="16" height="20" rx="1" fill="#f8dcb0" stroke="#d9a44a" stroke-width="1"/><rect x="6.500" y="6" width="11" height="14" fill="#fff" stroke="#999" stroke-width="0.600"/><rect x="9" y="1" width="6" height="3.500" fill="#e8b868" stroke="#b88428" stroke-width="0.700"/><path d="M8 10 H16 M8 12.500 H16 M8 15 H16" stroke="#aaa" stroke-width="0.700"/><path d="M1 9 L10 21 L17 8 L23 9" fill="none" stroke="#3b6ca8" stroke-width="1"/><circle cx="1.500" cy="9" r="1.200" fill="#fff" stroke="#3b6ca8" stroke-width="0.700"/><circle cx="10" cy="21" r="1.200" fill="#fff" stroke="#3b6ca8" stroke-width="0.700"/><circle cx="17" cy="8" r="1.200" fill="#fff" stroke="#3b6ca8" stroke-width="0.700"/><path d="M1 17 H9 M3 15 V19" stroke="#444" stroke-width="1.200"/></svg>
<svg style="left:1431px;top:64px" width="6" height="30"><rect width="6" height="30" fill="url(#gp)"/></svg>
<svg style="left:1443px;top:66px" width="24" height="24" viewBox="0 0 24 24"><path d="M2 1.500 L8 4 L13 3 L16 8 L21 10 L18 15 L20 20 L13 21 L8 18 L6 12 L3 8 Z" fill="none" stroke="#e0242c" stroke-width="1.200"/><circle cx="13" cy="12" r="4" fill="#fff" stroke="#111" stroke-width="2.400"/><path d="M16 15 L21 20" stroke="#111" stroke-width="3"/></svg>
<svg style="left:1501px;top:64px" width="6" height="30"><rect width="6" height="30" fill="url(#gp)"/></svg>
<svg style="left:1512px;top:65px" width="26" height="26" viewBox="0 0 26 26"><rect x="1" y="1" width="12" height="12" rx="1" fill="#c8c8c8" stroke="#a8a8a8" stroke-width="0.800"/><rect x="2.500" y="5" width="9" height="3" fill="#f4f0a8"/><rect x="13" y="12" width="12" height="12" rx="1" fill="#c8c8c8" stroke="#a8a8a8" stroke-width="0.800"/><rect x="14.500" y="16" width="9" height="3" fill="#f4f0a8"/><path d="M13 5 H17 V12" fill="none" stroke="#b0b0b0" stroke-width="1"/></svg>
<svg style="left:1558px;top:64px" width="6" height="30"><rect width="6" height="30" fill="url(#gp)"/></svg>
<svg style="left:1569.5px;top:67px" width="24" height="24" viewBox="0 0 24 24"><rect x="0" y="0" width="24" height="24" fill="#0a2456"/><circle cx="13" cy="11" r="9" fill="#3d7fd0"/><path d="M4 12 C9 5 18 6 21.500 10 C17 8 9 10 6 17 Z" fill="#e8f0fa"/><path d="M6 19 C12 13 18 13 22 14" fill="none" stroke="#e8f0fa" stroke-width="1.500"/><rect x="1.500" y="16.500" width="6" height="6" fill="#e8f0fa" stroke="#3d7fd0" stroke-width="0.600"/></svg>
<svg style="left:1588px;top:87px" width="8" height="5"><path d="M0 0 H8 L4 4.500 Z" fill="#000"/></svg>
<svg style="left:1609px;top:64px" width="6" height="30"><rect width="6" height="30" fill="url(#gp)"/></svg>
<svg style="left:1619px;top:66px" width="24" height="24" viewBox="0 0 24 24"><path d="M6 4 C12 6 10 16 18 20 M18 4 C12 8 14 14 6 20" fill="none" stroke="#b6b6b6" stroke-width="2.200"/><path d="M3 3 L5 5 M4 2 V6 M2 4 H6 M18 21 L22 20" stroke="#b6b6b6" stroke-width="0.900"/></svg>
<svg style="left:6px;top:103px" width="6" height="30"><rect width="6" height="30" fill="url(#gp)"/></svg>
<svg style="left:16px;top:106px" width="24" height="24" viewBox="0 0 24 24"><g fill="#b8b8b8" stroke="#9a9a9a" stroke-width="0.700"><path d="M3 20 L5 13 L13 1.500 L16 3.500 L8 15 Z"/><path d="M8 22 L10 15 L18 3.500 L21 5.500 L13 17 Z"/></g></svg>
<svg style="left:34px;top:125.5px" width="9" height="6"><path d="M0 0 H9 L4.500 5.500 Z" fill="#9a9a9a"/></svg>
<svg style="left:51px;top:106px" width="24" height="24" viewBox="0 0 24 24"><path d="M3 22.500 L5 15 L14.500 1.500 L19 4.500 L9.500 18 Z" fill="#f2d348" stroke="#b8962a" stroke-width="0.900"/><path d="M3 22.500 L5 15 L9.500 18 Z" fill="#e8d8b0" stroke="#8a7a4a" stroke-width="0.700"/><path d="M3 22.500 L3.800 19.500 L5.600 20.700 Z" fill="#222"/><path d="M8 14 L16.500 2.500" stroke="#fbea90" stroke-width="1.400"/></svg>
<svg style="left:86px;top:106px" width="24" height="24" viewBox="0 0 24 24"><rect x="2" y="1.500" width="19" height="20" rx="2" fill="#b4b4b4" stroke="#9c9c9c" stroke-width="1"/><rect x="5" y="2.500" width="13" height="8.500" fill="#e4e4e4"/><path d="M6.500 5 H16.500 M6.500 7 H16.500 M6.500 9 H16.500" stroke="#a0a0a0" stroke-width="0.800"/><rect x="6" y="14.500" width="9" height="6" fill="#e8e8e8"/><path d="M13 22 L14.500 17 L20.500 9.500 L23 11.500 L17 19 Z" fill="#aaa" stroke="#8c8c8c" stroke-width="0.700"/></svg>
<svg style="left:122px;top:106px" width="24" height="24" viewBox="0 0 24 24"><path d="M1 7.500 C1 1 10 2 14 4 C18 1.500 23 2.500 23 7.500 C23 12.500 17 13.500 14 12 C10 15 1 14 1 7.500 Z" fill="#c8c8c8" stroke="#909090" stroke-width="1"/><rect x="13" y="13" width="11" height="11" rx="1.500" fill="#c2c2c2"/><g transform="translate(18.5 18.5)" stroke="#fff" stroke-width="1.300"><path d="M0 -3.800 V3.800 M-3.800 0 H3.800 M-2.700 -2.700 L2.700 2.700 M-2.700 2.700 L2.700 -2.700"/><circle r="1.300" fill="#c2c2c2" stroke="#fff" stroke-width="1"/></g></svg>
<svg style="left:158px;top:106px" width="24" height="24" viewBox="0 0 24 24"><path d="M3 21 L6 9 C8 4 13 3 17 3" fill="none" stroke="#b0b0b0" stroke-width="1.200"/><rect x="1.500" y="19.500" width="3" height="3" fill="#fff" stroke="#a0a0a0" stroke-width="0.800"/><rect x="15.500" y="1.500" width="3" height="3" fill="#fff" stroke="#a0a0a0" stroke-width="0.800"/><rect x="12" y="13" width="10" height="10" rx="1.500" fill="#c2c2c2"/><g transform="translate(17.0 18.0)" stroke="#fff" stroke-width="1.300"><path d="M0 -3.800 V3.800 M-3.800 0 H3.800 M-2.700 -2.700 L2.700 2.700 M-2.700 2.700 L2.700 -2.700"/><circle r="1.300" fill="#c2c2c2" stroke="#fff" stroke-width="1"/></g></svg>
<svg style="left:188.5px;top:114.5px" width="9" height="6"><path d="M0 0 H9 L4.500 5.500 Z" fill="#a8a8a8"/></svg>
<svg style="left:208px;top:106px" width="24" height="24" viewBox="0 0 24 24"><path d="M1 7.500 C1 1 10 2 14 4 C18 1.500 23 2.500 23 7.500 C23 12.500 17 13.500 14 12 C10 15 1 14 1 7.500 Z" fill="#c8c8c8" stroke="#909090" stroke-width="1"/><rect x="13" y="13" width="10" height="10" rx="1.500" fill="#8c8c8c"/><path d="M14.500 18 H18.500 V15.500 L22 18 L18.500 20.500 V18" fill="#fff" stroke="#fff" stroke-width="1.500"/></svg>
<svg style="left:243px;top:106px" width="24" height="24" viewBox="0 0 24 24"><rect x="3.500" y="1.500" width="4.500" height="4.500" fill="#fff" stroke="#a0a0a0" stroke-width="0.900"/><path d="M5.500 6 L2 20 M8 3.500 H19" stroke="#a8a8a8" stroke-width="1"/><path d="M9 12 L19 22 M18 9 L9 21 M11 9 L15 8 L17 11" stroke="#a8a8a8" stroke-width="2.200" fill="none"/></svg>
<svg style="left:277px;top:106px" width="24" height="24" viewBox="0 0 24 24"><path d="M4 6 H20 M9 6 V3.500 H15 V6" fill="none" stroke="#777" stroke-width="1.500"/><path d="M5.500 8 H18.500 L17.500 22 H6.500 Z" fill="#ececec" stroke="#777" stroke-width="1.300"/><path d="M9.500 10.500 V19.500 M12 10.500 V19.500 M14.500 10.500 V19.500" stroke="#888" stroke-width="1"/></svg>
<svg style="left:312px;top:106px" width="24" height="24" viewBox="0 0 24 24"><path d="M1 5 L17 13 M1 12 L17 6" stroke="#b0b0b0" stroke-width="1.400"/><ellipse cx="19" cy="15" rx="3" ry="2.300" fill="none" stroke="#a0a0a0" stroke-width="1.200" transform="rotate(25 19 15)"/><ellipse cx="19.500" cy="5" rx="3" ry="2.300" fill="none" stroke="#a0a0a0" stroke-width="1.200" transform="rotate(-25 19.500 5)"/></svg>
<svg style="left:346px;top:106px" width="24" height="24" viewBox="0 0 24 24"><path d="M9 2 H16 L19 5 V15 H9 Z" fill="#f0f0f0" stroke="#9a9a9a" stroke-width="0.900"/><path d="M5 6 H12 L15 9 V21 H5 Z" fill="#f8f8f8" stroke="#777" stroke-width="1"/><path d="M7 12 H13 M7 14.500 H13 M7 17 H13" stroke="#888" stroke-width="0.900"/></svg>
<svg style="left:381px;top:106px" width="24" height="24" viewBox="0 0 24 24"><rect x="4" y="3" width="16" height="19" rx="1" fill="#e4e4e4" stroke="#8a8a8a" stroke-width="1"/><rect x="6.500" y="6" width="11" height="14" fill="#fafafa" stroke="#888" stroke-width="0.800"/><rect x="8.500" y="1.500" width="7" height="3.500" fill="#d0d0d0" stroke="#8a8a8a" stroke-width="0.800"/><path d="M8.500 10 H15.500 M8.500 12.500 H15.500 M8.500 15 H15.500" stroke="#888" stroke-width="0.900"/></svg>
<svg style="left:419px;top:103px" width="6" height="30"><rect width="6" height="30" fill="url(#gp)"/></svg>
<svg style="left:430px;top:106.5px" width="24" height="24" viewBox="0 0 24 24"><path d="M1 9 L5.500 4 H22.500 V14 H5.500 Z" fill="#f5d33a" stroke="#c9a21a" stroke-width="0.900"/><text x="6.500" y="12.500" font-family="Liberation Sans,sans-serif" font-weight="bold" font-size="9" fill="#222">abc</text></svg>
<svg style="left:465px;top:106.5px" width="25" height="25" viewBox="0 0 25 25"><path d="M12 12 L3.500 4 A11.500 11.500 0 0 0 12 23.500 Z" fill="#8ed433" stroke="#4a8a1a" stroke-width="0.900"/><path d="M12 12 L20.500 4 A11.500 11.500 0 0 1 12 23.500 Z" fill="#f6e24a" stroke="#b89a1a" stroke-width="0.900"/><path d="M12 10 L4.500 2.500 A11.500 11.500 0 0 1 19.500 2.500 Z" fill="#e8202a" stroke="#a01018" stroke-width="0.900"/></svg>
<svg style="left:500px;top:105.5px" width="25" height="25" viewBox="0 0 25 25"><rect x="0.500" y="0.500" width="23" height="19.500" fill="#dfeaf8" stroke="#2a6ae0" stroke-width="1.200" transform="translate(0 2)"/><path d="M1 9 L5 4.500 H20 V13.500 H5 Z" fill="#f5d33a" stroke="#c9a21a" stroke-width="0.800"/><text x="5.500" y="12" font-family="Liberation Sans,sans-serif" font-weight="bold" font-size="8.500" fill="#222">ab</text><path d="M17.500 15 V8" stroke="#f4f4f4" stroke-width="1.800"/><circle cx="19.500" cy="18.500" r="4.500" fill="#b01820"/></svg>
<svg style="left:535.5px;top:107.5px" width="24" height="24" viewBox="0 0 24 24"><path d="M1 8 L5 3.500 H19 V12.500 H5 Z" fill="#dedede" stroke="#b6b6b6" stroke-width="0.900"/><text x="6" y="11" font-family="Liberation Sans,sans-serif" font-weight="bold" font-size="8" fill="#9a9a9a">abc</text><circle cx="17.500" cy="17" r="4.500" fill="#9a9a9a"/><path d="M17.500 13 V7" stroke="#eee" stroke-width="1.600"/></svg>
<svg style="left:570.5px;top:107.5px" width="24" height="24" viewBox="0 0 24 24"><path d="M1 8 L5 3.500 H19 V12.500 H5 Z" fill="#dedede" stroke="#b6b6b6" stroke-width="0.900"/><text x="6" y="11" font-family="Liberation Sans,sans-serif" font-weight="bold" font-size="8" fill="#9a9a9a">abc</text><path d="M8 18 C11 13.500 18 13.500 21 18 C18 22 11 22 8 18 Z" fill="#eee" stroke="#9a9a9a" stroke-width="0.900"/><circle cx="14.500" cy="18" r="2.300" fill="#9a9a9a"/></svg>
<svg style="left:605.5px;top:107.5px" width="24" height="24" viewBox="0 0 24 24"><path d="M1 8 L5 3.500 H19 V12.500 H5 Z" fill="#dedede" stroke="#b6b6b6" stroke-width="0.900"/><text x="6" y="11" font-family="Liberation Sans,sans-serif" font-weight="bold" font-size="8" fill="#9a9a9a">abc</text><rect x="13" y="12.500" width="10" height="10" rx="1.500" fill="#9a9a9a"/><path d="M14.500 17.500 H18.500 V15 L22 17.500 L18.500 20 V17.500" fill="#fff" stroke="#fff" stroke-width="1.400"/></svg>
<svg style="left:640.5px;top:107.5px" width="24" height="24" viewBox="0 0 24 24"><path d="M1 8 L5 3.500 H19 V12.500 H5 Z" fill="#dedede" stroke="#b6b6b6" stroke-width="0.900"/><text x="6" y="11" font-family="Liberation Sans,sans-serif" font-weight="bold" font-size="8" fill="#9a9a9a">abc</text><rect x="13" y="12.500" width="10" height="10" rx="1.500" fill="#9a9a9a"/><path d="M16 18.500 A2.500 2.500 0 1 1 18.500 20.700" fill="none" stroke="#fff" stroke-width="1.500"/></svg>
<svg style="left:675.5px;top:107.5px" width="24" height="24" viewBox="0 0 24 24"><path d="M1 8 L5 3.500 H19 V12.500 H5 Z" fill="#dedede" stroke="#b6b6b6" stroke-width="0.900"/><text x="6" y="11" font-family="Liberation Sans,sans-serif" font-weight="bold" font-size="8" fill="#9a9a9a">abc</text><rect x="13" y="12.500" width="10" height="10" rx="1.500" fill="#c2c2c2"/><path d="M15 21 L21 14.500" stroke="#fff" stroke-width="2"/></svg>
<svg style="left:710.5px;top:108px" width="24" height="24" viewBox="0 0 24 24"><text x="12" y="8" text-anchor="middle" font-family="Liberation Sans,sans-serif" font-weight="bold" font-style="italic" font-size="8.500" fill="#222">Easy</text><path d="M5 15.500 L8.500 11.500 H22 V19.500 H8.500 Z" fill="#f5d33a" stroke="#c9a21a" stroke-width="0.800"/><text x="9" y="18" font-family="Liberation Sans,sans-serif" font-weight="bold" font-size="7" fill="#555">abc</text></svg>
<svg style="left:748px;top:103px" width="6" height="30"><rect width="6" height="30" fill="url(#gp)"/></svg>
<svg style="left:759.5px;top:107px" width="24" height="24" viewBox="0 0 24 24"><path d="M1 1.500 V22.500 H23 Z" fill="#cfcfcf" stroke="#a0a0a0" stroke-width="1"/><path d="M6 12 V18.500 H12.500 Z" fill="#f0f0f0" stroke="#a0a0a0" stroke-width="0.800"/><rect x="16" y="1.500" width="7" height="19" fill="#d8d8d8" stroke="#a8a8a8" stroke-width="0.800"/></svg>
<svg style="left:794px;top:106px" width="24" height="24" viewBox="0 0 24 24"><path d="M4 13 L12 5 L15.500 8.500 L9.500 14.500 C8 16.500 11 19 13 17.500 L19 11.500 L22.500 15 L15 22 C9 26 0 19 4 13 Z" fill="#8c8c8c" stroke="#777" stroke-width="0.600" transform="scale(0.900) translate(1 0)"/><path d="M11 4 L14 7 M18 11 L21 14" stroke="#eee" stroke-width="2"/></svg>
<svg style="left:829px;top:106px" width="24" height="24" viewBox="0 0 24 24"><path d="M1.500 9 L9 2 V6.500 C19 6 21 14 15 21 H10 C15 16 14 12 9 12 V16.500 Z" fill="#c4c4c4" stroke="#b0b0b0" stroke-width="0.700"/></svg>
<svg style="left:864px;top:106px" width="24" height="24" viewBox="0 0 24 24"><path d="M1 7.500 C1 1 10 2 14 4 C18 1.500 23 2.500 23 7.500 C23 12.500 17 13.500 14 12 C10 15 1 14 1 7.500 Z" fill="#c8c8c8" stroke="#909090" stroke-width="1"/><rect x="13" y="13" width="10" height="10" rx="1.500" fill="#8c8c8c"/><path d="M16 19 A2.500 2.500 0 1 1 18.500 21.200" fill="none" stroke="#fff" stroke-width="1.500"/><path d="M14.500 18 L16 20.500 L18 18.500 Z" fill="#fff"/></svg>
<svg style="left:899px;top:106px" width="24" height="24" viewBox="0 0 24 24"><circle cx="8.500" cy="8" r="7" fill="#c4c4c4" stroke="#a8a8a8" stroke-width="0.800"/><path d="M11 11 L19 11 L23 17 L19 23 H11 L8 17 Z" fill="#cdcdcd" stroke="#a8a8a8" stroke-width="0.800"/><path d="M8 8 L16 16" stroke="#888" stroke-width="1"/><path d="M16.500 16.500 L13 15.500 L15.500 13 Z" fill="#888"/></svg>
<svg style="left:934px;top:106px" width="24" height="24" viewBox="0 0 24 24"><path d="M1 7.500 C1 1 10 2 14 4 C18 1.500 23 2.500 23 7.500 C23 12.500 17 13.500 14 12 C10 15 1 14 1 7.500 Z" fill="#c8c8c8" stroke="#909090" stroke-width="1"/><ellipse cx="8" cy="7.500" rx="4" ry="2.800" fill="#e2e2e2" stroke="#949494" stroke-width="0.800"/><rect x="13" y="13" width="11" height="11" rx="1.500" fill="#c2c2c2"/><g transform="translate(18.5 18.5)" stroke="#fff" stroke-width="1.300"><path d="M0 -3.800 V3.800 M-3.800 0 H3.800 M-2.700 -2.700 L2.700 2.700 M-2.700 2.700 L2.700 -2.700"/><circle r="1.300" fill="#c2c2c2" stroke="#fff" stroke-width="1"/></g></svg>
<svg style="left:970.5px;top:106px" width="24" height="24" viewBox="0 0 24 24"><path d="M1 7.500 C1 1 10 2 14 4 C18 1.500 23 2.500 23 7.500 C23 12.500 17 13.500 14 12 C10 15 1 14 1 7.500 Z" fill="#c8c8c8" stroke="#909090" stroke-width="1"/><path d="M2.500 21.500 C1.500 16 8 12.500 12 14 C13 18 9 23 2.500 21.500 Z" fill="#c8c8c8" stroke="#909090" stroke-width="1"/><rect x="13" y="13" width="11" height="11" rx="1.500" fill="#c2c2c2"/><g transform="translate(18.5 18.5)" stroke="#fff" stroke-width="1.300"><path d="M0 -3.800 V3.800 M-3.800 0 H3.800 M-2.700 -2.700 L2.700 2.700 M-2.700 2.700 L2.700 -2.700"/><circle r="1.300" fill="#c2c2c2" stroke="#fff" stroke-width="1"/></g></svg>
<svg style="left:1005.5px;top:106px" width="24" height="24" viewBox="0 0 24 24"><path d="M1 7.500 C1 1 10 2 14 4 C18 1.500 23 2.500 23 7.500 C23 12.500 17 13.500 14 12 C10 15 1 14 1 7.500 Z" fill="#c8c8c8" stroke="#909090" stroke-width="1"/><ellipse cx="8" cy="7.500" rx="4" ry="2.800" fill="#e2e2e2" stroke="#949494" stroke-width="0.800"/><rect x="13" y="13" width="11" height="11" rx="1.500" fill="#c2c2c2"/><g transform="translate(18.5 18.5)" stroke="#fff" stroke-width="1.300"><path d="M0 -3.800 V3.800 M-3.800 0 H3.800 M-2.700 -2.700 L2.700 2.700 M-2.700 2.700 L2.700 -2.700"/><circle r="1.300" fill="#c2c2c2" stroke="#fff" stroke-width="1"/></g></svg>
<svg style="left:1040.5px;top:106px" width="24" height="24" viewBox="0 0 24 24"><path d="M1 7.500 C1 1 10 2 14 4 C18 1.500 23 2.500 23 7.500 C23 12.500 17 13.500 14 12 C10 15 1 14 1 7.500 Z" fill="#c8c8c8" stroke="#909090" stroke-width="1"/><ellipse cx="8" cy="7.500" rx="4" ry="2.800" fill="#e2e2e2" stroke="#949494" stroke-width="0.800"/><rect x="13" y="13" width="10" height="10" rx="1.500" fill="#c2c2c2"/><path d="M15.500 15.500 L20.500 20.500 M20.500 15.500 L15.500 20.500" stroke="#fff" stroke-width="2"/></svg>
<svg style="left:1075.5px;top:106px" width="24" height="24" viewBox="0 0 24 24"><path d="M1 7.500 C1 1 10 2 14 4 C18 1.500 23 2.500 23 7.500 C23 12.500 17 13.500 14 12 C10 15 1 14 1 7.500 Z" fill="#c8c8c8" stroke="#909090" stroke-width="1"/><path d="M2.500 21.500 C1.500 16 8 12.500 12 14 C13 18 9 23 2.500 21.500 Z" fill="#c8c8c8" stroke="#909090" stroke-width="1"/><rect x="13" y="13" width="10" height="10" rx="1.500" fill="#c2c2c2"/><path d="M15.500 15.500 L20.500 20.500 M20.500 15.500 L15.500 20.500" stroke="#fff" stroke-width="2"/></svg>
<svg style="left:1109px;top:106px" width="24" height="24" viewBox="0 0 24 24"><path d="M2 7 C2 2 9 2 13 4 C17 2 22 3 21 7 C20 10 15 9 13 11 C12 15 9 20 6 19 C3 18 5 13 3 11 Z" fill="#c4c4c4" stroke="#949494" stroke-width="0.900"/></svg>
<svg style="left:1144px;top:106px" width="24" height="24" viewBox="0 0 24 24"><path d="M3 17 C1 11 10 9 13 5 C17 1 23 4 21 9 C19 13 14 13 12 17 C10 22 5 22 3 17 Z" fill="#c4c4c4" stroke="#949494" stroke-width="0.900"/></svg>
<svg style="left:1179px;top:106px" width="24" height="24" viewBox="0 0 24 24"><path d="M2 7 C2 3 8 3 10 5 L10 11 C7 13 2 11 2 7 Z M22 7 C22 3 16 3 14 5 L14 11 C17 13 22 11 22 7 Z" fill="#c4c4c4" stroke="#949494" stroke-width="0.800"/><path d="M10 4 L14 16 M14 4 L10 16" stroke="#9a9a9a" stroke-width="1.400"/><circle cx="9.500" cy="19" r="2.600" fill="none" stroke="#9a9a9a" stroke-width="1.300"/><circle cx="14.500" cy="19" r="2.600" fill="none" stroke="#9a9a9a" stroke-width="1.300"/></svg>
<svg style="left:1214px;top:106px" width="24" height="24" viewBox="0 0 24 24"><path d="M2 7 C2 3 8 3 10 5 L10 11 C7 13 2 11 2 7 Z M22 7 C22 3 16 3 14 5 L14 11 C17 13 22 11 22 7 Z" fill="#c4c4c4" stroke="#949494" stroke-width="0.800"/><path d="M10 4 L14 16 M14 4 L10 16" stroke="#9a9a9a" stroke-width="1.400"/><circle cx="9.500" cy="19" r="2.600" fill="none" stroke="#9a9a9a" stroke-width="1.300"/><circle cx="14.500" cy="19" r="2.600" fill="none" stroke="#9a9a9a" stroke-width="1.300"/></svg>
<svg style="left:1249px;top:106px" width="24" height="24" viewBox="0 0 24 24"><path d="M2 7 C2 3 8 3 10 5 L10 11 C7 13 2 11 2 7 Z M22 7 C22 3 16 3 14 5 L14 11 C17 13 22 11 22 7 Z" fill="#c4c4c4" stroke="#949494" stroke-width="0.800"/><path d="M9 5.500 H15 M9 7.500 H15 M9 9.500 H15" stroke="#999" stroke-width="0.900"/><path d="M10 12 C8 17 14 17 16 22" fill="none" stroke="#a0a0a0" stroke-width="1"/></svg>
<svg style="left:1284px;top:106px" width="24" height="24" viewBox="0 0 24 24"><path d="M3 4 H21 M3 12 H21 M3 20 H21" stroke="#b4b4b4" stroke-width="2.800"/><path d="M3 4 H21 M3 12 H21 M3 20 H21" stroke="#f6f6f6" stroke-width="1.300"/><path d="M12 2 V22 M9 6 L12 4 L15 6 M9 10 L12 12 L15 10 M9 18 L12 20 L15 18" stroke="#a0a0a0" stroke-width="0.800" fill="none"/></svg>
<svg style="left:1319px;top:106px" width="24" height="24" viewBox="0 0 24 24"><path d="M12 3 L22 8 L12 12 Z" fill="#d0d0d0" stroke="#a8a8a8" stroke-width="0.800"/><path d="M12 3 V14 L7 22 H17 L12 14" fill="none" stroke="#b0b0b0" stroke-width="0.900"/><path d="M6 17 C1 13 3 6 9 5" fill="none" stroke="#a8a8a8" stroke-width="1"/><path d="M10.500 4.500 L7.500 3 L8 6.500 Z" fill="#a8a8a8"/></svg>
<svg style="left:1350.5px;top:114.5px" width="9" height="6"><path d="M0 0 H9 L4.500 5.500 Z" fill="#a8a8a8"/></svg>
<svg style="left:1374px;top:103px" width="6" height="30"><rect width="6" height="30" fill="url(#gp)"/></svg>
<div style="left:1380px;top:106px;width:78px;height:26px;background:#fff;border:1px solid #b0b0b0;border-radius:3px;"></div>
<div style="left:1441px;top:107px;width:16px;height:24px;background:linear-gradient(#f4f4f4,#dedede);border-left:1px solid #c4c4c4;border-radius:0 3px 3px 0;"></div>
<svg style="left:1444.5px;top:116px" width="9" height="6"><path d="M0 0 H9 L4.500 5.500 Z" fill="#000"/></svg>
<svg style="left:1407px;top:112px" width="21" height="13"><path d="M0.500 6.500 L6 0.500 H20.500 V12.500 H6 Z" fill="#111"/><path d="M10 3.500 L16 9.500 M16 3.500 L10 9.500" stroke="#fff" stroke-width="2"/></svg>
<svg style="left:1464.5px;top:107px" width="24" height="24" viewBox="0 0 24 24"><circle cx="9.500" cy="8.500" r="6.800" fill="#fff" stroke="#111" stroke-width="2.600"/><path d="M14.500 14 L21.500 21.500" stroke="#111" stroke-width="3.600" stroke-linecap="round"/></svg>
<svg style="left:1503px;top:103px" width="6" height="30"><rect width="6" height="30" fill="url(#gp)"/></svg>
<svg style="left:1513px;top:106px" width="24" height="24" viewBox="0 0 24 24"><circle cx="12" cy="12" r="10.800" fill="#b4d88e" stroke="#229a44" stroke-width="1.800"/><path d="M3 12 C3 5 10 1.500 16 3.500 C12 5 13 9 9 11 C6 12 5 11 3 12 Z" fill="#168a38"/><path d="M14 4 L16 7 L13.500 9 L12 6 Z" fill="#168a38"/><path d="M4 17 C8 21 16 21 20 17" fill="none" stroke="#dff0c8" stroke-width="1.200"/></svg>
<svg style="left:1548px;top:106px" width="24" height="24" viewBox="0 0 24 24"><rect x="1" y="1" width="22" height="22" fill="#cfe6c0"/><path d="M1 8 L8 4 L14 9 L23 5 M4 23 L9 14 L17 17 L23 12 M1 16 L7 12" stroke="#b8d8a4" stroke-width="2" fill="none"/><path d="M9 7 L21 14 L16 15 L19 21 L17 22 L14 16 L10.500 19 Z" fill="#2a6ae8" stroke="#1a4ab8" stroke-width="0.600"/></svg>
<svg style="left:1583px;top:106px" width="24" height="24" viewBox="0 0 24 24"><rect x="0" y="0" width="24" height="24" fill="#c8c8fa"/><path d="M2 12 L14 4 L22.500 13 L10 21 Z" fill="#2a3440" stroke="#1a222c" stroke-width="0.800"/></svg>
<svg style="left:1621px;top:103px" width="6" height="30"><rect width="6" height="30" fill="url(#gp)"/></svg>
<svg style="left:1632px;top:106px" width="24" height="24" viewBox="0 0 24 24"><rect x="1" y="1" width="22" height="22" fill="#cfe6c0"/><path d="M1 8 L8 4 L14 9 L23 5 M4 23 L9 14 L17 17 L23 12 M1 16 L7 12" stroke="#b8d8a4" stroke-width="2" fill="none"/><path d="M8 9 C10 5 16 6 16 10 C16 14 11 13 11 17" fill="none" stroke="#9ab4d8" stroke-width="2"/><path d="M13 19 L16 22 L22 14" fill="none" stroke="#d8b830" stroke-width="2"/></svg>
<svg style="left:6px;top:142px" width="6" height="30"><rect width="6" height="30" fill="url(#gp)"/></svg>
<svg style="left:16px;top:145px" width="24" height="24" viewBox="0 0 24 24"><path d="M1 7.500 C1 1 10 2 14 4 C18 1.500 23 2.500 23 7.500 C23 12.500 17 13.500 14 12 C10 15 1 14 1 7.500 Z" fill="#c8c8c8" stroke="#909090" stroke-width="1"/><path d="M2.500 21.500 C1.500 16 8 12.500 12 14 C13 18 9 23 2.500 21.500 Z" fill="#c8c8c8" stroke="#909090" stroke-width="1"/><path d="M8 9 C10 13 14 12 15 9 M7 14 L15 17" fill="none" stroke="#9a9a9a" stroke-width="1"/></svg>
<svg style="left:48px;top:154.5px" width="9" height="6"><path d="M0 0 H9 L4.500 5.500 Z" fill="#a8a8a8"/></svg>
<svg style="left:67px;top:145px" width="24" height="24" viewBox="0 0 24 24"><path d="M1 7.500 C1 1 10 2 14 4 C18 1.500 23 2.500 23 7.500 C23 12.500 17 13.500 14 12 C10 15 1 14 1 7.500 Z" fill="#c8c8c8" stroke="#909090" stroke-width="1"/><path d="M2.500 21.500 C1.500 16 8 12.500 12 14 C13 18 9 23 2.500 21.500 Z" fill="#c8c8c8" stroke="#909090" stroke-width="1"/><rect x="14" y="14" width="9.5" height="9.5" rx="1.500" fill="#c2c2c2"/><g transform="translate(18.75 18.75)" stroke="#fff" stroke-width="1.300"><path d="M0 -3.800 V3.800 M-3.800 0 H3.800 M-2.700 -2.700 L2.700 2.700 M-2.700 2.700 L2.700 -2.700"/><circle r="1.300" fill="#c2c2c2" stroke="#fff" stroke-width="1"/></g></svg>
<svg style="left:101.5px;top:145px" width="24" height="24" viewBox="0 0 24 24"><path d="M2 7 C2 3 8 3 10 5 L10 11 C7 13 2 11 2 7 Z M22 7 C22 3 16 3 14 5 L14 11 C17 13 22 11 22 7 Z" fill="#c4c4c4" stroke="#949494" stroke-width="0.800"/><path d="M10 4 L14 16 M14 4 L10 16" stroke="#9a9a9a" stroke-width="1.400"/><circle cx="9.500" cy="19" r="2.600" fill="none" stroke="#9a9a9a" stroke-width="1.300"/><circle cx="14.500" cy="19" r="2.600" fill="none" stroke="#9a9a9a" stroke-width="1.300"/></svg>
<svg style="left:136.5px;top:145px" width="24" height="24" viewBox="0 0 24 24"><path d="M2 7 C2 3 8 3 10 5 L10 11 C7 13 2 11 2 7 Z M22 7 C22 3 16 3 14 5 L14 11 C17 13 22 11 22 7 Z" fill="#c4c4c4" stroke="#949494" stroke-width="0.800"/><path d="M9 4.500 H15 M9 6.500 H15 M9 8.500 H15 M9 10.500 H15" stroke="#888" stroke-width="0.900"/><path d="M11 12 C9 17 15 17 13 22" fill="none" stroke="#999" stroke-width="1"/></svg>
<svg style="left:171.5px;top:145px" width="24" height="24" viewBox="0 0 24 24"><path d="M3 4 C3 1 10 2 13 3.500 C16 1.500 21 2 21 6 C21 10 16 10.500 13 9.500 C10 12 3 9 3 4 Z" fill="#d8d8d8" stroke="#949494" stroke-width="0.900" stroke-dasharray="2 1"/><path d="M3 20 C2 15 8 12 11 13.500 C12 18 9 23 3 20 Z" fill="#d8d8d8" stroke="#949494" stroke-width="0.900"/><rect x="13" y="13" width="10" height="10" fill="#bcbcbc"/><circle cx="18" cy="18" r="3" fill="#eee"/></svg>
<svg style="left:206.5px;top:141px" width="24" height="24" viewBox="0 0 24 24"><path d="M2 9 C2 4 9 5 12 6 C15 4 22 4 22 9 C22 14 15 14 12 13 C9 15 2 14 2 9 Z" fill="#c8c8c8" stroke="#949494" stroke-width="0.900"/><ellipse cx="8" cy="9.500" rx="3.500" ry="2.500" fill="#e4e4e4" stroke="#b0b0b0" stroke-width="0.700" stroke-dasharray="1.500 1"/></svg>
<svg style="left:241.5px;top:141px" width="24" height="24" viewBox="0 0 24 24"><path d="M2 9 C2 4 9 5 12 6 C15 4 22 4 22 9 C22 14 15 14 12 13 C9 15 2 14 2 9 Z" fill="#ececec" stroke="#949494" stroke-width="0.900" stroke-dasharray="2 1.300"/><ellipse cx="8" cy="9" rx="3.500" ry="2.500" fill="#c4c4c4"/></svg>
<svg style="left:276.5px;top:145px" width="24" height="24" viewBox="0 0 24 24"><path d="M1 7.500 C1 1 10 2 14 4 C18 1.500 23 2.500 23 7.500 C23 12.500 17 13.500 14 12 C10 15 1 14 1 7.500 Z" fill="#c8c8c8" stroke="#909090" stroke-width="1"/><ellipse cx="8" cy="7.500" rx="4" ry="2.800" fill="#e2e2e2" stroke="#949494" stroke-width="0.800"/><rect x="13" y="13" width="11" height="11" rx="1.500" fill="#c2c2c2"/><g transform="translate(18.5 18.5)" stroke="#fff" stroke-width="1.300"><path d="M0 -3.800 V3.800 M-3.800 0 H3.800 M-2.700 -2.700 L2.700 2.700 M-2.700 2.700 L2.700 -2.700"/><circle r="1.300" fill="#c2c2c2" stroke="#fff" stroke-width="1"/></g></svg>
<svg style="left:308px;top:154.5px" width="9" height="6"><path d="M0 0 H9 L4.500 5.500 Z" fill="#a8a8a8"/></svg>
<svg style="left:326.5px;top:145px" width="24" height="24" viewBox="0 0 24 24"><path d="M2 6 L10 2 L14 9 L6 12 Z" fill="#d4d4d4" stroke="#949494" stroke-width="0.900"/><path d="M9 4 L18 3 L20 10 L11 12 Z" fill="#c4c4c4" stroke="#949494" stroke-width="0.900" opacity="0.850"/><rect x="13" y="13" width="10" height="10" rx="1.500" fill="#c2c2c2"/><g transform="translate(18.0 18.0)" stroke="#fff" stroke-width="1.300"><path d="M0 -3.800 V3.800 M-3.800 0 H3.800 M-2.700 -2.700 L2.700 2.700 M-2.700 2.700 L2.700 -2.700"/><circle r="1.300" fill="#c2c2c2" stroke="#fff" stroke-width="1"/></g></svg>
<svg style="left:358px;top:154.5px" width="9" height="6"><path d="M0 0 H9 L4.500 5.500 Z" fill="#a8a8a8"/></svg>
<svg style="left:376.5px;top:145px" width="24" height="24" viewBox="0 0 24 24"><path d="M2 6 L10 2 L14 9 L6 12 Z" fill="#b0b0b0" stroke="#999" stroke-width="0.900"/><path d="M9 4 L18 3 L20 10 L11 12 Z" fill="#d4d4d4" stroke="#949494" stroke-width="0.900" opacity="0.850"/><rect x="13" y="13" width="10" height="10" rx="1.500" fill="#c2c2c2"/><g transform="translate(18.0 18.0)" stroke="#fff" stroke-width="1.300"><path d="M0 -3.800 V3.800 M-3.800 0 H3.800 M-2.700 -2.700 L2.700 2.700 M-2.700 2.700 L2.700 -2.700"/><circle r="1.300" fill="#c2c2c2" stroke="#fff" stroke-width="1"/></g></svg>
<svg style="left:412px;top:145px" width="24" height="24" viewBox="0 0 24 24"><path d="M2 8 L10 3 L12 14 L4 17 Z M22 8 L14 3 L12 14 L20 17 Z" fill="#b4b4b4" stroke="#999" stroke-width="0.800"/><rect x="12" y="14" width="10" height="9" fill="#d8d8d8" stroke="#b4b4b4" stroke-width="0.700" stroke-dasharray="1.500 1"/><circle cx="5" cy="3" r="1.300" fill="#fff" stroke="#999" stroke-width="0.700"/><circle cx="19" cy="3" r="1.300" fill="#fff" stroke="#999" stroke-width="0.700"/></svg>
<svg style="left:446.5px;top:145px" width="24" height="24" viewBox="0 0 24 24"><path d="M3 6 L10 20 L17 4 M10 20 L4 22" fill="none" stroke="#c0c0c0" stroke-width="1"/><circle cx="3" cy="6" r="1.600" fill="#fff" stroke="#b8b8b8" stroke-width="0.800"/><circle cx="17" cy="4" r="1.600" fill="#fff" stroke="#b8b8b8" stroke-width="0.800"/><rect x="13" y="13" width="10" height="10" fill="#c4c4c4"/><circle cx="18" cy="18" r="3" fill="#eee"/></svg>
<svg style="left:478px;top:154.5px" width="9" height="6"><path d="M0 0 H9 L4.500 5.500 Z" fill="#a8a8a8"/></svg>
<svg style="left:497px;top:145px" width="24" height="24" viewBox="0 0 24 24"><path d="M2 4 C7 1 12 6 17 3 L19 12 C15 15 11 11 8 14 C5 16 3 15 3 12 Z" fill="#e4e4e4" stroke="#b4b4b4" stroke-width="0.900"/><text x="18" y="22" font-family="Liberation Serif,serif" font-size="12" fill="#8c8c8c">j</text></svg>
<svg style="left:532px;top:145px" width="24" height="24" viewBox="0 0 24 24"><path d="M2 4 C7 1 12 6 17 3 L19 12 C15 15 11 11 8 14 C5 16 3 15 3 12 Z" fill="#e4e4e4" stroke="#b4b4b4" stroke-width="0.900"/><text x="18" y="22" font-family="Liberation Serif,serif" font-size="12" fill="#8c8c8c">d</text></svg>
<svg style="left:567px;top:145px" width="24" height="24" viewBox="0 0 24 24"><path d="M2 4 C7 1 12 6 17 3 L19 12 C15 15 11 11 8 14 C5 16 3 15 3 12 Z" fill="#e4e4e4" stroke="#b4b4b4" stroke-width="0.900"/><text x="18" y="22" font-family="Liberation Serif,serif" font-size="12" fill="#8c8c8c">j</text></svg>
<svg style="left:601px;top:145px" width="24" height="24" viewBox="0 0 24 24"><path d="M4 8 L12 4 L20 18 L12 22 Z" fill="#d8d8d8" stroke="#c0c0c0" stroke-width="0.800" stroke-dasharray="1.500 1"/><path d="M5 5 L19 21 M9 3 L22 17" stroke="#c4c4c4" stroke-width="1"/></svg>
<svg style="left:641px;top:142px" width="6" height="30"><rect width="6" height="30" fill="url(#gp)"/></svg>
<svg style="left:665px;top:142px" width="6" height="30"><rect width="6" height="30" fill="url(#gp)"/></svg>
<svg style="left:675.5px;top:144.5px" width="25" height="25" viewBox="0 0 25 25"><rect x="1.500" y="1.500" width="18" height="17" fill="#fff" stroke="#3b6ca8" stroke-width="0.900"/><path d="M1.500 5.500 H19.500 M1.500 9.500 H19.500 M1.500 13.500 H19.500 M6 1.500 V18.500 M12 1.500 V18.500" stroke="#5b8cc8" stroke-width="0.800"/><rect x="6" y="1.500" width="6" height="17" fill="#f5d33a" opacity="0.850"/><text x="14" y="9" font-family="Liberation Serif,serif" font-size="10" fill="#5a2a78">ε</text><circle cx="17.500" cy="17.500" r="6" fill="#3aa03a"/><path d="M14.500 17.500 A3 3 0 0 1 20 15.500 M20.500 17.500 A3 3 0 0 1 15 19.500" fill="none" stroke="#fff" stroke-width="1.500"/></svg>
<svg style="left:711px;top:144.5px" width="25" height="25" viewBox="0 0 25 25"><path d="M12 1 L20 9 H15.500 V14 H8.500 V9 H4 Z" fill="#3a8ed0" stroke="#2a6aa8" stroke-width="0.700"/><text x="0.500" y="24" font-family="Liberation Serif,serif" font-weight="bold" font-size="19" fill="#5a2a78">ε</text><circle cx="16.500" cy="18" r="5.500" fill="#3aa03a"/><path d="M13.500 18 A3 3 0 0 1 19 16 M19.500 18 A3 3 0 0 1 14 20" fill="none" stroke="#fff" stroke-width="1.400"/></svg>
<svg style="left:746px;top:144.5px" width="25" height="25" viewBox="0 0 25 25"><path d="M12 14 L20 6 H15.500 V1 H8.500 V6 H4 Z" fill="#3a8ed0" stroke="#2a6aa8" stroke-width="0.700"/><text x="0.500" y="24" font-family="Liberation Serif,serif" font-weight="bold" font-size="19" fill="#5a2a78">ε</text><circle cx="16.500" cy="18" r="5.500" fill="#3aa03a"/><path d="M13.500 18 A3 3 0 0 1 19 16 M19.500 18 A3 3 0 0 1 14 20" fill="none" stroke="#fff" stroke-width="1.400"/></svg>
<svg style="left:811px;top:142px" width="6" height="30"><rect width="6" height="30" fill="url(#gp)"/></svg>
<svg style="left:822px;top:145px" width="24" height="24" viewBox="0 0 24 24"><path d="M2 12 L7 3.500 H17 L22 12 L17 20.500 H7 Z" fill="none" stroke="#111" stroke-width="1.100"/><g fill="#e01818"><circle cx="2" cy="12" r="2"/><circle cx="7" cy="3.500" r="2"/><circle cx="17" cy="3.500" r="2"/><circle cx="22" cy="12" r="2"/><circle cx="17" cy="20.500" r="2"/><circle cx="7" cy="20.500" r="2"/></g></svg>
<svg style="left:861px;top:142px" width="6" height="30"><rect width="6" height="30" fill="url(#gp)"/></svg>
<svg style="left:872px;top:145px" width="24" height="24" viewBox="0 0 24 24"><rect x="1" y="1.500" width="14.500" height="14.500" fill="#fbe04d" stroke="#d9b52a" stroke-width="0.900"/><rect x="1" y="16.5" width="6.5" height="6.5" rx="1.800" fill="#5a9a4a" stroke="#3f7a32" stroke-width="0.600"/><path d="M4.25 18.3 V21.2 M2.8 19.75 H5.7" stroke="#fff" stroke-width="1.900"/><path d="M11 9 l0 11 l2.600 -2.400 l2 4.200 l1.900 -0.900 l-2 -4.100 l3.500 -0.300 Z" fill="#fff" stroke="#333" stroke-width="0.900"/></svg>
<div style="left:902px;top:145px;width:119px;height:26px;background:#fff;border:1px solid #b4b4b4;border-radius:3px;"></div>
<div style="left:1004px;top:146px;width:1px;height:24px;background:#c8c8c8;"></div>
<div class="t" style="left:906px;top:148px;font-size:15px;line-height:19px;height:19px;color:#000;letter-spacing:0.616px;">0,000</div>
<svg style="left:1008px;top:150px" width="9" height="18"><path d="M0.500 5 L4.500 0.500 L8.500 5 Z M0.500 13 L4.500 17.500 L8.500 13 Z" fill="#111"/></svg>
<div style="left:1023px;top:145px;width:65px;height:26px;border:1px solid #b4b4b4;border-radius:3px;background:linear-gradient(#fafafa,#e4e4e4);"></div>
<div style="left:1070px;top:146px;width:1px;height:24px;background:#c8c8c8;"></div>
<div class="t" style="left:1027.5px;top:148px;font-size:15px;line-height:19px;height:19px;color:#000;">m</div>
<svg style="left:1075px;top:156px" width="9" height="6"><path d="M0 0 H9 L4.500 5.500 Z" fill="#000"/></svg>
<div style="left:1090px;top:148px;width:16px;height:16px;background:#fff;border:1px solid #9a9a9a;"></div>
<div class="t" style="left:1111.5px;top:147px;font-size:15px;line-height:19px;height:19px;color:#000;letter-spacing:0.345px;">Use centroid</div>
<svg style="left:1234px;top:142px" width="6" height="30"><rect width="6" height="30" fill="url(#gp)"/></svg>
<svg style="left:1245px;top:145px" width="24" height="24" viewBox="0 0 24 24"><path d="M5 1.500 H13 V7 L9 13 L5 7 Z" fill="#fff" stroke="#b80f14" stroke-width="1.300"/><path d="M7 2 V7 M9 2 V9 M11 2 V7" stroke="#b80f14" stroke-width="1"/><path d="M9 13 C9 19 12 17 13 19 C14 21 16 18 18 20 C20 22 21 19 23 20" fill="none" stroke="#b80f14" stroke-width="1.300"/></svg>
<svg style="left:1279px;top:145px" width="24" height="24" viewBox="0 0 24 24"><path d="M5 1.500 H13 V7 L9 13 L5 7 Z" fill="#fff" stroke="#b80f14" stroke-width="1.300"/><path d="M7 2 V7 M9 2 V9 M11 2 V7" stroke="#b80f14" stroke-width="1"/><path d="M8 18.500 H23" stroke="#b80f14" stroke-width="1.300"/></svg>
<svg style="left:1315.5px;top:145.5px" width="24" height="24" viewBox="0 0 24 24"><path d="M2 12 C2 5 9 1.500 15 2.500 C21 3.500 23 9 20 11.500 C17 14 14 11 12 13 C10 15 13 17 10 19 C6 21 2 17 2 12 Z" fill="#b80f14"/><circle cx="7" cy="9" r="1.600" fill="#fff"/><circle cx="6" cy="14.500" r="1.600" fill="#fff"/></svg>
<svg style="left:1350.5px;top:145.5px" width="24" height="24" viewBox="0 0 24 24"><path d="M3 15 L13 4 L21 10 L11 21 L6 21 Z" fill="#b80f14"/><path d="M13 4 L17 0.500 L24 6 L21 10 Z" fill="#fff" stroke="#b80f14" stroke-width="1.300"/></svg>
<svg style="left:1385px;top:145.5px" width="24" height="24" viewBox="0 0 24 24"><path d="M4 4 L20 20 M20 4 L4 20" stroke="#b80f14" stroke-width="4"/></svg>
<svg style="left:1419px;top:145px" width="24" height="24" viewBox="0 0 24 24"><path d="M5 2.500 H22.500 V16 H11 L2.500 22 L6 16 H5 Z" fill="#fff" stroke="#b80f14" stroke-width="1.200"/><path d="M9 7 H19 M9 11 H17" stroke="#b80f14" stroke-width="1"/></svg>
<svg style="left:1455px;top:145.5px" width="24" height="24" viewBox="0 0 24 24"><path d="M4 3 H19 V24 H4 Z" fill="#fff" stroke="#b80f14" stroke-width="1.200"/><path d="M4 3 L11 5 V26 L4 24 Z" fill="#b80f14"/></svg>
<svg style="left:1490px;top:144.5px" width="24" height="24" viewBox="0 0 24 24"><path d="M12 2 V15 M6 9.500 L12 15.500 L18 9.500" fill="none" stroke="#b80f14" stroke-width="2.200"/><path d="M3 15 V21.500 H21 V15" fill="none" stroke="#b80f14" stroke-width="2.200"/></svg>
<svg style="left:1525px;top:144.5px" width="24" height="24" viewBox="0 0 24 24"><path d="M12 16 V3 M6 8.500 L12 2.500 L18 8.500" fill="none" stroke="#b80f14" stroke-width="2.200"/><path d="M3 15 V21.500 H21 V15" fill="none" stroke="#b80f14" stroke-width="2.200"/></svg>
<svg style="left:1577px;top:142px" width="6" height="30"><rect width="6" height="30" fill="url(#gp)"/></svg>
<svg style="left:1588px;top:146px" width="24" height="24" viewBox="0 0 24 24"><rect x="1" y="0" width="22" height="24" fill="#fff"/><path d="M1 4.5 H23" stroke="#e03030" stroke-width="0.800"/><circle cx="3.5" cy="4.5" r="1.700" fill="#e01820"/><circle cx="8.5" cy="4.5" r="1.700" fill="#e01820"/><circle cx="13.5" cy="4.5" r="1.700" fill="#e01820"/><circle cx="18.5" cy="4.5" r="1.700" fill="#e01820"/><circle cx="22" cy="4.5" r="1.700" fill="#e01820"/><path d="M1 11.5 H23" stroke="#e03030" stroke-width="0.800"/><circle cx="3.5" cy="11.5" r="1.700" fill="#e01820"/><circle cx="8.5" cy="11.5" r="1.700" fill="#e01820"/><circle cx="13.5" cy="11.5" r="1.700" fill="#e01820"/><circle cx="18.5" cy="11.5" r="1.700" fill="#e01820"/><circle cx="22" cy="11.5" r="1.700" fill="#e01820"/><path d="M1 18.5 H23" stroke="#e03030" stroke-width="0.800"/><circle cx="3.5" cy="18.5" r="1.700" fill="#e01820"/><circle cx="8.5" cy="18.5" r="1.700" fill="#e01820"/><circle cx="13.5" cy="18.5" r="1.700" fill="#e01820"/><circle cx="18.5" cy="18.5" r="1.700" fill="#e01820"/><circle cx="22" cy="18.5" r="1.700" fill="#e01820"/></svg>
<svg style="left:1639px;top:142px" width="6" height="30"><rect width="6" height="30" fill="url(#gp)"/></svg>
<svg style="left:1649.5px;top:145.5px" width="25" height="25" viewBox="0 0 25 25"><rect x="4" y="1.500" width="19" height="14" rx="1" fill="#e8f0e0" stroke="#333" stroke-width="1.300"/><path d="M6 12 C10 11 12 6 21 5 M7 5 C12 6 14 11 21 12" fill="none" stroke="#3a9a3a" stroke-width="1"/><rect x="0.500" y="8.500" width="7" height="13" rx="1" fill="#f4f4f4" stroke="#333" stroke-width="1"/><path d="M2 12 H6 M2 14.500 H6 M2 17 H6" stroke="#3a9a3a" stroke-width="1"/><path d="M13.500 15.500 V19 M9.500 19.500 H18" stroke="#222" stroke-width="1.800"/></svg>
<svg style="left:1688px;top:142px" width="6" height="30"><rect width="6" height="30" fill="url(#gp)"/></svg>
<svg style="left:1698.5px;top:147px" width="24" height="24" viewBox="0 0 24 24"><rect x="1" y="1" width="22" height="22" rx="4" fill="#2a2a2a"/><text x="12" y="19" text-anchor="middle" font-family="Liberation Sans,sans-serif" font-weight="bold" font-size="19" fill="#e8e030">S</text></svg>
<svg style="left:6px;top:181px" width="6" height="30"><rect width="6" height="30" fill="url(#gp)"/></svg>
<svg style="left:16.5px;top:183.5px" width="25" height="25" viewBox="0 0 25 25"><path d="M11.500 1.500 C8 1.500 7 3 7 5 V7.500 H12 V8.500 H5 C2 8.500 1.500 11 1.500 13 C1.500 15.500 3 17 5 17 H7 V14 C7 12 8.500 11 10.500 11 H15 C16.500 11 17.500 10 17.500 8.500 V5 C17.500 2.500 15 1.500 11.500 1.500 Z" fill="#3b77a8"/><path d="M12.500 23 C16 23 17 21.500 17 19.500 V17 H12 V16 H19 C22 16 22.500 13.500 22.500 11.500 C22.500 9 21 7.500 19 7.500 H17.500 V10.500 C17.500 12.500 15.500 13.500 13.500 13.500 H9 C7.500 13.500 6.500 14.500 6.500 16 V19.500 C6.500 22 9 23 12.500 23 Z" fill="#f8d34a"/><circle cx="9.500" cy="4.500" r="1" fill="#fff"/><path d="M15 19 L22 22 L15 25" fill="none" stroke="#333" stroke-width="1.500" transform="translate(0 -2.500)"/></svg>
<svg style="left:52.5px;top:184px" width="24" height="24" viewBox="0 0 24 24"><rect x="0" y="0" width="24" height="24" fill="#fff"/><rect x="6" y="2" width="16" height="11" fill="#b49af0"/><circle cx="7.500" cy="14" r="5.500" fill="none" stroke="#e02848" stroke-width="1.300"/></svg>
<div style="left:87px;top:184px;width:25px;height:25px;background:#fff;"></div>
<div class="t" style="left:87.5px;top:183px;font-size:13px;line-height:16px;height:16px;color:#000;transform:scaleX(0.9038);transform-origin:0 0;">CXF</div>
<div class="t" style="left:101px;top:196px;font-size:10px;line-height:12px;height:12px;color:#000;font-weight:bold;letter-spacing:0.000px;">IN</div>
<svg style="left:88px;top:197px" width="12" height="12"><path d="M2 4 L5 1 L9 2 M10 5 L9 9 L5 10.500 M2 9 L1 6" fill="none" stroke="#c8181c" stroke-width="2.200"/></svg>
<svg style="left:122.5px;top:184px" width="24" height="24" viewBox="0 0 24 24"><path d="M3 19 L9 11 L13 14 L21 4" fill="none" stroke="#d0d0d0" stroke-width="5" stroke-linecap="round" stroke-linejoin="round"/><path d="M3 19 L9 11 L13 14 L21 4" fill="none" stroke="#a8a8a8" stroke-width="1.800" stroke-linecap="round" stroke-linejoin="round"/></svg>
<svg style="left:152.5px;top:192.5px" width="9" height="6"><path d="M0 0 H9 L4.500 5.500 Z" fill="#a8a8a8"/></svg>
<svg style="left:171px;top:183.5px" width="25" height="25" viewBox="0 0 25 25"><circle cx="11.500" cy="13" r="10.500" fill="#3d6fb4" stroke="#9ab8e0" stroke-width="1.500"/><circle cx="11.500" cy="13" r="7" fill="#e8f0fa"/><path d="M7 11 H16 V18 H7 Z" fill="#111"/><path d="M12 11 L19 4 M19 4 H13.500 M19 4 V9.500" stroke="#f0c830" stroke-width="3"/></svg>
<svg style="left:205.5px;top:183.5px" width="25" height="25" viewBox="0 0 25 25"><path d="M22 2 C19 2 18 5 16 7 C12 9 8 10 6 14 L2 21 L5 20 L8 16 L7 22 L10 21 L11 15 C14 14 17 12 18 9 L21 7 Z" fill="#3f8ad0"/><path d="M3 23 C5 18 8 17 10 18 M6 24 C7 20 10 19 12 20" fill="none" stroke="#3f8ad0" stroke-width="1"/></svg>
<svg style="left:243px;top:184px" width="24" height="24" viewBox="0 0 24 24"><path d="M2 21 C6 15 14 14 22 17 C16 19 10 22 2 21 Z" fill="#4aa03a" stroke="#2a7a1a" stroke-width="0.700"/><circle cx="13" cy="4" r="3" fill="#f0a020" stroke="#b87010" stroke-width="0.700"/><path d="M10 8 C10 7 16 7 16 8 L15.500 15 L14.500 20 H11.500 L10.500 15 Z" fill="#f0a020" stroke="#b87010" stroke-width="0.700"/></svg>
<svg style="left:277.5px;top:183.5px" width="25" height="25" viewBox="0 0 25 25"><path d="M0.500 23.500 L7 16 C12 13 7 9 13 6 L23 1 L21 6 C15 9 21 13 14 18 L11 23.500 Z" fill="#111"/><path d="M5 22 L10 17 C15 13 10 10 17 5" fill="none" stroke="#fff" stroke-width="0.900" stroke-dasharray="2 1.500"/><rect x="15.500" y="13" width="8" height="10.500" fill="#f0c820" stroke="#8a6a10" stroke-width="0.700"/><rect x="17.500" y="8" width="4" height="5" fill="#f0c820" stroke="#8a6a10" stroke-width="0.700"/></svg>
<svg style="left:312.5px;top:184px" width="24" height="24" viewBox="0 0 24 24"><defs><radialGradient id="gl" cx="40%" cy="30%" r="75%"><stop offset="0" stop-color="#8ab8f0"/><stop offset="0.600" stop-color="#2a5ab8"/><stop offset="1" stop-color="#0a2a78"/></radialGradient></defs><circle cx="12" cy="12" r="11" fill="url(#gl)"/><path d="M12 4 V17 M5.500 10.500 H18.500 M12 3 L10 6 H14 Z M12 18 L10 15 H14 Z M4.500 10.500 L7.500 8.500 V12.500 Z M19.500 10.500 L16.500 8.500 V12.500 Z" stroke="#fff" stroke-width="1" fill="#fff"/><text x="12" y="16.500" text-anchor="middle" font-family="Liberation Sans,sans-serif" font-weight="bold" font-size="4.500" fill="#d02020">Trento</text></svg>
<svg style="left:347.5px;top:184px" width="24" height="24" viewBox="0 0 24 24"><path d="M4 8 L10 3 L22 5 L17 10 Z" fill="#f0e030" stroke="#111" stroke-width="1.200"/><path d="M3 13 L9 8 L22 10 L16 15 Z" fill="#48b048" stroke="#111" stroke-width="1.200"/><path d="M3 18 L9 13 L22 15 L16 20 Z" fill="#f0e030" stroke="#111" stroke-width="1.200"/><path d="M12 0.500 V23.500" stroke="#e01820" stroke-width="1.300"/><path d="M9.500 3 H14.500 M9.500 21 H14.500" stroke="#e01820" stroke-width="1.500"/></svg>
<svg style="left:382px;top:184px" width="24" height="24" viewBox="0 0 24 24"><rect x="0.500" y="0.500" width="23" height="23" rx="3" fill="#a8cbee"/><path d="M5 5 L10 18 L18.500 4.500" fill="none" stroke="#1a4a8a" stroke-width="1.300"/><circle cx="5" cy="5" r="1.700" fill="#fff" stroke="#1a4a8a" stroke-width="0.900"/><circle cx="10" cy="18" r="1.700" fill="#fff" stroke="#1a4a8a" stroke-width="0.900"/><circle cx="18.500" cy="4.500" r="1.700" fill="#fff" stroke="#1a4a8a" stroke-width="0.900"/><text x="1" y="7" font-size="6" font-family="Liberation Sans,sans-serif" fill="#1a4a8a">1</text><text x="2" y="22" font-size="6" font-family="Liberation Sans,sans-serif" fill="#1a4a8a">2</text><text x="19" y="13" font-size="6" font-family="Liberation Sans,sans-serif" fill="#1a4a8a">3</text></svg>
<svg style="left:417px;top:184px" width="24" height="24" viewBox="0 0 24 24"><path d="M1.500 21.500 V15 L9 8.500 C11 7.500 13 8.500 14 10 L20 16 L22.500 21.500 Z" fill="#10d028" stroke="#111" stroke-width="1.400"/><circle cx="18.500" cy="4.500" r="2.600" fill="#f8e020"/><path d="M18.500 0 V9 M14 4.500 H23 M15.300 1.300 L21.700 7.700 M21.700 1.300 L15.300 7.700" stroke="#f8e020" stroke-width="0.900"/></svg>
<svg style="left:451.5px;top:184px" width="24" height="24" viewBox="0 0 24 24"><path d="M1 21 C8 21 12 14 23 10 V13 C13 16 9 23 1 23.500 Z" fill="#8ab0e0"/><path d="M5 9 V19 M18 3 V13" stroke="#3f6fb0" stroke-width="1"/><path d="M5 9 L1.500 11 L5 13 Z M18 3 L14.500 5 L18 7 Z" fill="#f0d020" stroke="#3f6fb0" stroke-width="0.600"/><path d="M20 3 L23 1 M21 5 H24" stroke="#3f6fb0" stroke-width="0.800"/></svg>
<svg style="left:486.5px;top:184px" width="24" height="24" viewBox="0 0 24 24"><path d="M4.500 15.500 L12 6.500 L19.500 15.500" fill="none" stroke="#2a8ad8" stroke-width="3.400" stroke-linejoin="round"/><circle cx="12" cy="6.500" r="3.600" fill="#2a8ad8"/><circle cx="4.500" cy="15.500" r="3.600" fill="#2a8ad8"/><circle cx="19.500" cy="15.500" r="3.600" fill="#2a8ad8"/><path d="M8 16 H16" stroke="#2a8ad8" stroke-width="2.400"/></svg>
<svg style="left:521px;top:184px" width="24" height="24" viewBox="0 0 24 24"><text x="-0.500" y="20.500" font-family="Liberation Serif,serif" font-size="31" fill="#5a2a78">ε</text><path d="M15.500 5.500 H24 M19.800 1.500 V9.500" stroke="#222" stroke-width="1.300"/></svg>
<svg style="left:558px;top:184px" width="24" height="24" viewBox="0 0 24 24"><path d="M2 22 C10 20 18 12 22 2 C20 12 14 20 4 23 Z" fill="#c0c0c0" stroke="#a0a0a0" stroke-width="0.600"/><ellipse cx="11.500" cy="15.500" rx="9.500" ry="4.500" fill="none" stroke="#3a9a3a" stroke-width="1.600"/><path d="M5 15 C5 9 18 9 18 15 C16 18.500 7 18.500 5 15 Z" fill="#c04848" stroke="#8a2828" stroke-width="0.700"/></svg>
<svg style="left:592px;top:184px" width="24" height="24" viewBox="0 0 24 24"><circle cx="12" cy="12" r="12" fill="#f26a1a"/><text x="12" y="16" text-anchor="middle" font-family="Liberation Sans,sans-serif" font-weight="bold" font-size="10" fill="#fce0c8">Ref</text></svg>
<svg style="left:627px;top:184px" width="24" height="24" viewBox="0 0 24 24"><path d="M3 3 L7 4 L19 17 L21.500 21.500 L17 19 L5 6.500 Z" fill="#3a7ad0" stroke="#2a5aa8" stroke-width="0.600"/><path d="M21 2.500 C18 1.500 15 3 15 6.500 L4 18 C2.500 19.500 4.500 22 6.500 20.500 L17.500 9.500 C21 10 23 7 22 4 L19 7 L17 5.500 Z" fill="#3a7ad0" stroke="#2a5aa8" stroke-width="0.600"/></svg>
<svg style="left:658.5px;top:192.5px" width="9" height="6"><path d="M0 0 H9 L4.500 5.500 Z" fill="#000"/></svg>
<svg style="left:675.5px;top:183.5px" width="25" height="25" viewBox="0 0 25 25"><rect x="2" y="1.500" width="17" height="21" fill="#fff" stroke="#111" stroke-width="1.600"/><path d="M4.500 6 H7 M9 6 H16 M4.500 10 H7 M9 10 H16 M4.500 14 H7 M9 14 H12 M4.500 18 H7" stroke="#111" stroke-width="1.300"/><ellipse cx="18" cy="18" rx="4.200" ry="5" fill="#111"/><circle cx="18" cy="12" r="2" fill="#111"/><path d="M12 14 L24 22 M24 14 L12 22 M12 18 H24" stroke="#111" stroke-width="1"/></svg>
<svg style="left:712px;top:184px" width="24" height="24" viewBox="0 0 24 24"><rect x="2" y="2" width="19" height="18" fill="#eaf1fa" stroke="#5b8cc8" stroke-width="1"/><rect x="3" y="3" width="17" height="3.500" fill="#a9c4e6"/><path d="M4.500 9.500 H9 M4.500 12.500 H8 M4.500 15.500 H8" stroke="#5b8cc8" stroke-width="1"/><circle cx="13.500" cy="13.500" r="4.300" fill="#fff" stroke="#111" stroke-width="1.700"/><path d="M16.500 17 L21.500 22" stroke="#111" stroke-width="2.600"/></svg>
<div class="t" style="left:751px;top:187px;font-size:15px;line-height:19px;height:19px;color:#000;letter-spacing:0.085px;">Selection Sets</div>
<svg style="left:861px;top:184px" width="24" height="24" viewBox="0 0 24 24"><path d="M4 4 L20 19 M19 3 L5 21 M12 11 L22 11" stroke="#4a8ac8" stroke-width="1.100"/><g fill="#fff" stroke="#4a8ac8" stroke-width="1"><circle cx="4" cy="4" r="2"/><circle cx="20" cy="19" r="2"/><circle cx="19" cy="3" r="2"/><circle cx="5" cy="21" r="2"/><circle cx="22" cy="11" r="1.800"/></g></svg>
<svg style="left:896px;top:184px" width="24" height="24" viewBox="0 0 24 24"><circle cx="9.500" cy="9" r="8" fill="#6a94cc" stroke="#9ab8e0" stroke-width="0.800"/><text x="9.500" y="14" text-anchor="middle" font-family="Liberation Serif,serif" font-style="italic" font-weight="bold" font-size="13" fill="#fff">i</text><path d="M12.5 11 l0 11 l2.600 -2.400 l2 4.200 l1.900 -0.900 l-2 -4.100 l3.500 -0.300 Z" fill="#fff" stroke="#777" stroke-width="0.900"/></svg>
<svg style="left:932px;top:184px" width="24" height="24" viewBox="0 0 24 24"><rect x="5" y="6" width="9" height="17" rx="1.500" fill="#8a9ab0" stroke="#4a5a78" stroke-width="1"/><rect x="7" y="1" width="2.500" height="6" fill="#6a7a98"/><rect x="6.500" y="9" width="6" height="4" fill="#d8e0f0"/><rect x="6.500" y="15" width="6" height="6" fill="#f0d850" stroke="#4a5a78" stroke-width="0.600"/><path d="M17 3 C19 1.500 21 2.500 21 4.500 V23" fill="none" stroke="#a8a8a8" stroke-width="2.600"/><path d="M14.500 4 L20 8" stroke="#c8a8a0" stroke-width="2.400"/></svg>
<svg style="left:7px;top:231.5px" width="25" height="25" viewBox="0 0 25 25"><g transform="translate(1 0)"><path d="M3 3 L9 19 L17 4" fill="none" stroke="#2a3a5a" stroke-width="1.200"/><circle cx="3" cy="3" r="2" fill="#fff" stroke="#2a3a5a"/><circle cx="9" cy="19" r="2" fill="#fff" stroke="#2a3a5a"/><circle cx="17" cy="4" r="2" fill="#fff" stroke="#2a3a5a"/></g><rect x="14" y="14" width="9.5" height="9.5" rx="1.800" fill="#5a9a4a" stroke="#3f7a32" stroke-width="0.600"/><path d="M18.75 15.8 V21.7 M15.8 18.75 H21.7" stroke="#fff" stroke-width="1.900"/></svg>
<svg style="left:7px;top:265.5px" width="25" height="25" viewBox="0 0 25 25"><g fill="#1d3a6a"><rect x="1" y="1" width="6" height="6"/><rect x="13" y="1" width="6" height="6"/><rect x="7" y="7" width="6" height="6"/><rect x="1" y="13" width="6" height="6"/></g><g fill="#6a9ad0"><rect x="7" y="1" width="6" height="6"/><rect x="1" y="7" width="6" height="6"/><rect x="13" y="7" width="6" height="6"/><rect x="7" y="13" width="6" height="6"/></g><rect x="14" y="14" width="9.5" height="9.5" rx="1.800" fill="#5a9a4a" stroke="#3f7a32" stroke-width="0.600"/><path d="M18.75 15.8 V21.7 M15.8 18.75 H21.7" stroke="#fff" stroke-width="1.900"/></svg>
<svg style="left:7px;top:300.5px" width="25" height="25" viewBox="0 0 25 25"><path d="M2 23 C4 14 10 5 23 1.500 C22 10 14 16 6 18 Z" fill="#8ab0e0" stroke="#2a4a7a" stroke-width="1"/><path d="M2 23 C6 16 12 9 21 3" fill="none" stroke="#2a4a7a" stroke-width="0.900"/><rect x="14.5" y="15" width="9.5" height="9.5" rx="1.800" fill="#5a9a4a" stroke="#3f7a32" stroke-width="0.600"/><path d="M19.25 16.8 V22.7 M16.3 19.75 H22.2" stroke="#fff" stroke-width="1.900"/></svg>
<svg style="left:7px;top:333.5px" width="25" height="25" viewBox="0 0 25 25"><path d="M3 4 C3 1 9 0.500 12 2 C16 0.500 20 3 18 8 C17 11 15 12 14 15 C14 18 12 19 10 17 L9 13 C6 13 3 10 3 4 Z" fill="#3a6a9a" stroke="#1d3a5a" stroke-width="0.800"/><path d="M7 5 C7 8 9 9 9 12 M13 4 C15 6 14 9 12 10" fill="none" stroke="#c8d8ec" stroke-width="1"/><rect x="14.5" y="15" width="9.5" height="9.5" rx="1.800" fill="#5a9a4a" stroke="#3f7a32" stroke-width="0.600"/><path d="M19.25 16.8 V22.7 M16.3 19.75 H22.2" stroke="#fff" stroke-width="1.900"/></svg>
<svg style="left:38.5px;top:342.5px" width="9" height="6"><path d="M0 0 H9 L4.500 5.500 Z" fill="#000"/></svg>
<svg style="left:7px;top:367.5px" width="25" height="25" viewBox="0 0 25 25"><circle cx="11" cy="11" r="9.500" fill="#b8c8d8" stroke="#6a7a8a" stroke-width="1"/><path d="M4 7 C7 5 9 8 8 10 C7 12 5 11 3.500 12 M13 3 C15 5 17 4 18 6 C16 8 14 7 12.500 9 M10 14 C12 13 15 14 16 16 C14 18 12 19 11 17 Z" fill="#9a9a9a" stroke="#777" stroke-width="0.500" opacity="0.900"/><ellipse cx="11" cy="11" rx="9.500" ry="3.500" fill="none" stroke="#1d3560" stroke-width="0.600"/><path d="M11 1.500 V20.500" stroke="#1d3560" stroke-width="0.600"/><ellipse cx="11" cy="11" rx="4.500" ry="9.500" fill="none" stroke="#1d3560" stroke-width="0.600"/><rect x="14.5" y="15" width="9.5" height="9.5" rx="1.800" fill="#5a9a4a" stroke="#3f7a32" stroke-width="0.600"/><path d="M19.25 16.8 V22.7 M16.3 19.75 H22.2" stroke="#fff" stroke-width="1.900"/></svg>
<svg style="left:38.5px;top:376.5px" width="9" height="6"><path d="M0 0 H9 L4.500 5.500 Z" fill="#000"/></svg>
<svg style="left:7px;top:401.5px" width="25" height="25" viewBox="0 0 25 25"><circle cx="11" cy="11" r="9.500" fill="#fff" stroke="#1d3560" stroke-width="1.700"/><ellipse cx="11" cy="11" rx="9.500" ry="3.800" fill="none" stroke="#1d3560" stroke-width="1.200"/><ellipse cx="11" cy="11" rx="4.500" ry="9.500" fill="none" stroke="#1d3560" stroke-width="1.200"/><path d="M11 1.500 V20.500 M3 6 H19 M3 16 H19" stroke="#1d3560" stroke-width="1"/><rect x="14.5" y="15" width="9.5" height="9.5" rx="1.800" fill="#5a9a4a" stroke="#3f7a32" stroke-width="0.600"/><path d="M19.25 16.8 V22.7 M16.3 19.75 H22.2" stroke="#fff" stroke-width="1.900"/></svg>
<svg style="left:7px;top:434.5px" width="25" height="25" viewBox="0 0 25 25"><circle cx="11" cy="11" r="9.500" fill="#dce8f4" stroke="#7a9ac0" stroke-width="1"/><ellipse cx="11" cy="11" rx="9.500" ry="3.800" fill="none" stroke="#8aa8c8" stroke-width="0.800"/><ellipse cx="11" cy="11" rx="4.500" ry="9.500" fill="none" stroke="#8aa8c8" stroke-width="0.800"/><g transform="translate(3 3) scale(0.700)"><path d="M3 3 L9 19 L17 4" fill="none" stroke="#1d3560" stroke-width="1.200"/><circle cx="3" cy="3" r="2" fill="#fff" stroke="#1d3560"/><circle cx="9" cy="19" r="2" fill="#fff" stroke="#1d3560"/><circle cx="17" cy="4" r="2" fill="#fff" stroke="#1d3560"/></g><rect x="14.5" y="15" width="9.5" height="9.5" rx="1.800" fill="#5a9a4a" stroke="#3f7a32" stroke-width="0.600"/><path d="M19.25 16.8 V22.7 M16.3 19.75 H22.2" stroke="#fff" stroke-width="1.900"/></svg>
<svg style="left:38.5px;top:443.5px" width="9" height="6"><path d="M0 0 H9 L4.500 5.500 Z" fill="#000"/></svg>
<svg style="left:7px;top:469.5px" width="25" height="25" viewBox="0 0 25 25"><path d="M8 2 C14 2 16 8 12 13 C10 15.500 7 17 4 17.500 C7 15 9 12 8.500 10 C4 11 3 3 8 2 Z" fill="#3d6aa5"/><rect x="14.5" y="15" width="9.5" height="9.5" rx="1.800" fill="#5a9a4a" stroke="#3f7a32" stroke-width="0.600"/><path d="M19.25 16.8 V22.7 M16.3 19.75 H22.2" stroke="#fff" stroke-width="1.900"/></svg>
<svg style="left:7px;top:504.5px" width="25" height="25" viewBox="0 0 25 25"><rect x="1" y="1" width="20" height="20" rx="2" fill="#c8dcf0" stroke="#6a8ab0" stroke-width="0.800"/><g transform="translate(2 1)"><path d="M3 3 L9 19 L17 4" fill="none" stroke="#1d3560" stroke-width="1.200"/><circle cx="3" cy="3" r="2" fill="#fff" stroke="#1d3560"/><circle cx="9" cy="19" r="2" fill="#fff" stroke="#1d3560"/><circle cx="17" cy="4" r="2" fill="#fff" stroke="#1d3560"/></g><rect x="14.5" y="15" width="9.5" height="9.5" rx="1.800" fill="#5a9a4a" stroke="#3f7a32" stroke-width="0.600"/><path d="M19.25 16.8 V22.7 M16.3 19.75 H22.2" stroke="#fff" stroke-width="1.900"/></svg>
<svg style="left:7px;top:537.5px" width="25" height="25" viewBox="0 0 25 25"><g transform="translate(1 0)"><path d="M3 3 L9 19 L17 4" fill="none" stroke="#2a3a5a" stroke-width="1.200"/><circle cx="3" cy="3" r="2" fill="#fff" stroke="#2a3a5a"/><circle cx="9" cy="19" r="2" fill="#fff" stroke="#2a3a5a"/><circle cx="17" cy="4" r="2" fill="#fff" stroke="#2a3a5a"/></g><rect x="14" y="14" width="9.5" height="9.5" rx="1.500" fill="#e0a820"/><g transform="translate(18.75 18.75)" stroke="#fff" stroke-width="1.300"><path d="M0 -3.800 V3.800 M-3.800 0 H3.800 M-2.700 -2.700 L2.700 2.700 M-2.700 2.700 L2.700 -2.700"/><circle r="1.300" fill="#e0a820" stroke="#fff" stroke-width="1"/></g></svg>
<svg style="left:38.5px;top:546.5px" width="9" height="6"><path d="M0 0 H9 L4.500 5.500 Z" fill="#000"/></svg>
<svg style="left:14px;top:572.5px" width="25" height="25" viewBox="0 0 25 25"><path d="M4 1 H14 L20 7 V21 H4 Z" fill="#6cc04a"/><path d="M14 1 V7 H20 Z" fill="#9ad87a"/><rect x="15" y="15" width="8.5" height="8.5" rx="1.800" fill="#4a8a3a" stroke="#3f7a32" stroke-width="0.600"/><path d="M19.25 16.8 V21.7 M16.8 19.25 H21.7" stroke="#fff" stroke-width="1.900"/></svg>
<svg style="left:8px;top:605.5px" width="25" height="25" viewBox="0 0 25 25"><g transform="scale(1.120)"><circle cx="11" cy="11" r="9.500" fill="#4f8fe0" stroke="#3a6ab0" stroke-width="1"/><path d="M4 7 C7 5 9 8 8 10 C7 12 5 11 3.500 12 M13 3 C15 5 17 4 18 6 C16 8 14 7 12.500 9 M10 14 C12 13 15 14 16 16 C14 18 12 19 11 17 Z" fill="#9a9a9a" stroke="#777" stroke-width="0.500" opacity="0.900"/><ellipse cx="11" cy="11" rx="9.500" ry="3.500" fill="none" stroke="#1d3560" stroke-width="0.600"/><path d="M11 1.500 V20.500" stroke="#1d3560" stroke-width="0.600"/><ellipse cx="11" cy="11" rx="4.500" ry="9.500" fill="none" stroke="#1d3560" stroke-width="0.600"/></g><rect x="15" y="15" width="9" height="8" rx="1.500" fill="#5a9a4a"/><path d="M17 19 H22" stroke="#fff" stroke-width="1.800"/></svg>
<svg style="left:24.5px;top:626.5px" width="9" height="6"><path d="M0 0 H9 L4.500 5.500 Z" fill="#000"/></svg>
<svg style="left:14.5px;top:640.5px" width="25" height="25" viewBox="0 0 25 25"><circle cx="11" cy="11" r="9.500" fill="#4f8fe0" stroke="#3a6ab0" stroke-width="1"/><path d="M4 7 C7 5 9 8 8 10 C7 12 5 11 3.500 12 M13 3 C15 5 17 4 18 6 C16 8 14 7 12.500 9 M10 14 C12 13 15 14 16 16 C14 18 12 19 11 17 Z" fill="#9a9a9a" stroke="#777" stroke-width="0.500" opacity="0.900"/><ellipse cx="11" cy="11" rx="9.500" ry="3.500" fill="none" stroke="#1d3560" stroke-width="0.600"/><path d="M11 1.500 V20.500" stroke="#1d3560" stroke-width="0.600"/><ellipse cx="11" cy="11" rx="4.500" ry="9.500" fill="none" stroke="#1d3560" stroke-width="0.600"/><rect x="14" y="14" width="9.500" height="9.500" rx="1.500" fill="#5a9a4a"/><circle cx="18" cy="18" r="2.300" fill="none" stroke="#fff" stroke-width="1.200"/><path d="M19.700 19.700 L22 22" stroke="#fff" stroke-width="1.400"/></svg>
<svg style="left:17.5px;top:690.5px" width="24" height="24" viewBox="0 0 24 24"><path d="M12 0.500 V23.500 M0.500 12 H23.500" stroke="#222" stroke-width="1"/><circle cx="12" cy="12" r="3.300" fill="none" stroke="#d02828" stroke-width="1" stroke-dasharray="2 1.300"/></svg>
<svg style="left:16.5px;top:723px" width="24" height="24" viewBox="0 0 24 24"><circle cx="10" cy="3.500" r="2.300" fill="#fff" stroke="#333" stroke-width="1"/><path d="M9 5.500 L4 16 L5 19 M11 5.500 L15 13" fill="none" stroke="#333" stroke-width="1.100"/><rect x="12" y="12.500" width="11" height="10" rx="1.500" fill="#3a4a5a"/><text x="17.500" y="20.500" text-anchor="middle" font-family="Liberation Sans,sans-serif" font-weight="bold" font-size="7" fill="#fff">C≡</text></svg>
<svg style="left:16.5px;top:755px" width="24" height="24" viewBox="0 0 24 24"><path d="M2 2 L10 22 L13 5" fill="none" stroke="#2a4a8a" stroke-width="1"/><circle cx="2.500" cy="2.500" r="1.800" fill="#fff" stroke="#2a4a8a" stroke-width="0.800"/><circle cx="10" cy="22" r="1.800" fill="#fff" stroke="#2a4a8a" stroke-width="0.800"/><path d="M12 4 C15 1 22 1 23 5 L22 13 C19 14 17 17 13 16 Z" fill="#f4e4e4" stroke="#c02828" stroke-width="1"/><path d="M16 6 L18 19" stroke="#c02828" stroke-width="0.800" stroke-dasharray="1.500 1"/><circle cx="20" cy="9" r="1.500" fill="#fff" stroke="#c02828" stroke-width="0.700"/></svg>
<svg style="left:16.5px;top:789px" width="24" height="24" viewBox="0 0 24 24"><path d="M3 9 L12 4 L22 8 L18 15 L8 16 Z" fill="#5b8cc8" stroke="#2a4a8a" stroke-width="1"/><path d="M2 22 L9 12 L21 3" fill="none" stroke="#2a4a8a" stroke-width="0.900"/><g fill="#f0e050" stroke="#2a4a8a" stroke-width="0.700"><circle cx="3" cy="9" r="1.700"/><circle cx="12" cy="4" r="1.700"/><circle cx="22" cy="8" r="1.700"/><circle cx="8" cy="16" r="1.700"/><circle cx="2.500" cy="22" r="1.700"/><circle cx="21" cy="3" r="1.700"/></g><path d="M12 18 L15.500 22 L22.500 13" fill="none" stroke="#e0b020" stroke-width="2.200"/></svg>
<svg style="left:16px;top:822.5px" width="25" height="25" viewBox="0 0 25 25"><rect x="1" y="1.500" width="21" height="19" fill="#fff" stroke="#5b8cc8" stroke-width="1.200"/><rect x="2" y="2.500" width="19" height="4" fill="#a9c4e6"/><path d="M1 10 H22 M1 14 H22 M8 6 V20 M15 6 V20" stroke="#9ab8dc" stroke-width="0.800"/><rect x="8" y="6.500" width="7" height="14" fill="#f5e36a" opacity="0.800"/><circle cx="15.500" cy="15.500" r="7" fill="#3aa03a"/><path d="M11.500 15.500 A4 4 0 0 1 18.500 12.800 M19.500 15.500 A4 4 0 0 1 12.500 18.200" fill="none" stroke="#fff" stroke-width="1.700"/></svg>
<svg style="left:16px;top:855.5px" width="25" height="25" viewBox="0 0 25 25"><rect x="1" y="2" width="21" height="19" fill="#fff" stroke="#5b8cc8" stroke-width="1.200"/><rect x="2" y="3" width="19" height="4.500" fill="#e04848"/><path d="M3 11 H14 M3 14 H12 M3 17 H10" stroke="#5b8cc8" stroke-width="1.200"/><path d="M8 17 L21 3 L24 5.500 L11 19.500 Z" fill="#f0a830" stroke="#c07a10" stroke-width="0.600"/><path d="M8 17 L7 21 L11 19.500 Z" fill="#f4e0c0"/></svg>
<svg style="left:62px;top:247px" width="18" height="18" viewBox="0 0 22 22"><path d="M8 12 L17 3 L20 6 L11 15 Z" fill="#e8a040" stroke="#a86a18" stroke-width="0.600"/><path d="M2 13 L8 10 L13 15 L9 21 Z" fill="#f0d040" stroke="#a88a18" stroke-width="0.600"/><path d="M1.500 14 L6 18 L4 19.500 Z M4 17 L8 20.500 L6 21.500 Z" fill="#d83838"/><path d="M3 12 L7 9" stroke="#3a6ac8" stroke-width="2.200"/></svg>
<svg style="left:89px;top:247px" width="18" height="18" viewBox="0 0 22 22"><rect x="6" y="2" width="10" height="12" fill="#f0f0f0" stroke="#777" stroke-width="0.900"/><rect x="3" y="5" width="10" height="12" fill="#f0f0f0" stroke="#777" stroke-width="0.900"/><path d="M8 0.500 V18" stroke="#666" stroke-width="1"/><rect x="12" y="12" width="8" height="8" rx="1.800" fill="#5a9a4a" stroke="#3f7a32" stroke-width="0.600"/><path d="M16.0 13.8 V18.2 M13.8 16.0 H18.2" stroke="#fff" stroke-width="1.900"/></svg>
<svg style="left:116px;top:247px" width="18" height="18" viewBox="0 0 22 22"><path d="M1 10 C5 3 15 3 20 10 C15 16 5 16 1 10 Z" fill="#ececec" stroke="#888" stroke-width="1"/><circle cx="10.500" cy="10" r="3.800" fill="#5a8ac8" stroke="#2a4a7a" stroke-width="0.800"/><circle cx="10.500" cy="10" r="1.500" fill="#111"/></svg>
<svg style="left:127px;top:260px" width="8" height="5"><path d="M0 0 H8 L4 4.500 Z" fill="#000"/></svg>
<svg style="left:143px;top:247px" width="18" height="18" viewBox="0 0 22 22"><ellipse cx="11" cy="4" rx="8.500" ry="2.800" fill="#f4d030" stroke="#c8a010" stroke-width="0.800"/><path d="M2.500 5 L9 12.500 V20.500 L13 19 V12.500 L19.500 5 C16 8 6 8 2.500 5 Z" fill="#5b8cc8" stroke="#3b6ca8" stroke-width="0.800"/></svg>
<svg style="left:169px;top:247px" width="18" height="18" viewBox="0 0 22 22"><text x="0.500" y="14" font-family="Liberation Serif,serif" font-size="22" fill="#999">ε</text><path d="M10.500 12.500 H19.500 L17 15.500 V20.500 L13 19 V15.500 Z" fill="#d8d8d8" stroke="#b4b4b4" stroke-width="0.700"/></svg>
<svg style="left:194px;top:252px" width="9" height="6"><path d="M0 0 H9 L4.500 5.500 Z" fill="#a8a8a8"/></svg>
<svg style="left:212.5px;top:247px" width="18" height="18" viewBox="0 0 22 22"><path d="M4 3 V18 M4 6 H8 M4 12 H8 M4 18 H8" fill="none" stroke="#888" stroke-width="0.900"/><rect x="7" y="4.500" width="3" height="3" fill="#f0a030"/><rect x="7" y="10.500" width="3" height="3" fill="#f0a030"/><rect x="7" y="16" width="3" height="3" fill="#f0a030"/><path d="M14.500 20.500 L20.500 13 H17 V3 H12 V13 H8.500 Z" fill="#5b8cc8" stroke="#3b6ca8" stroke-width="0.700"/></svg>
<svg style="left:239.5px;top:247px" width="18" height="18" viewBox="0 0 22 22"><path d="M4 3 V18 M4 6 H8 M4 12 H8 M4 18 H8" fill="none" stroke="#888" stroke-width="0.900"/><rect x="7" y="4.500" width="3" height="3" fill="#f0a030"/><rect x="7" y="10.500" width="3" height="3" fill="#f0a030"/><rect x="7" y="16" width="3" height="3" fill="#f0a030"/><path d="M14.500 2 L20.500 9.500 H17 V19.500 H12 V9.500 H8.500 Z" fill="#5b8cc8" stroke="#3b6ca8" stroke-width="0.700"/></svg>
<svg style="left:266px;top:247px" width="18" height="18" viewBox="0 0 22 22"><rect x="2.500" y="2.500" width="14" height="12" fill="#fff" stroke="#666" stroke-width="1"/><rect x="12.500" y="11.500" width="7" height="7" rx="1.500" fill="#e83840"/><path d="M14 15 H18" stroke="#fff" stroke-width="1.500"/></svg>
<svg style="left:62px;top:624px" width="18" height="18" viewBox="0 0 22 22"><rect x="2.500" y="2.500" width="13" height="12" fill="#fff" stroke="#666" stroke-width="1"/><circle cx="16" cy="15.500" r="3" fill="#8ac868" stroke="#4a8a3a" stroke-width="0.800"/></svg>
<svg style="left:89px;top:624px" width="18" height="18" viewBox="0 0 22 22"><g transform="scale(0.900) translate(0.500 0.500)"><path d="M2.500 11.500 C2.500 4.500 9 1.500 14.500 4.300 L16.500 1.800 L18 10.500 L9.300 9.800 L11.800 7.600 C9 6.300 6.800 8 6.800 11.500 Z" fill="#4a8ad8" stroke="#2f68b8" stroke-width="0.800"/><path d="M21.500 12.500 C21.500 19.500 15 22.500 9.500 19.700 L7.500 22.200 L6 13.500 L14.700 14.200 L12.200 16.400 C15 17.700 17.200 16 17.200 12.500 Z" fill="#4a8ad8" stroke="#2f68b8" stroke-width="0.800"/></g></svg>
<svg style="left:116px;top:624px" width="18" height="18" viewBox="0 0 22 22"><ellipse cx="11" cy="4" rx="8.500" ry="2.800" fill="#f4d030" stroke="#c8a010" stroke-width="0.800"/><path d="M2.500 5 L9 12.500 V20.500 L13 19 V12.500 L19.500 5 C16 8 6 8 2.500 5 Z" fill="#5b8cc8" stroke="#3b6ca8" stroke-width="0.800"/></svg>
<svg style="left:143.5px;top:624px" width="18" height="18" viewBox="0 0 22 22"><path d="M4 3 V18 M4 6 H8 M4 12 H8 M4 18 H8" fill="none" stroke="#888" stroke-width="0.900"/><rect x="7" y="4.500" width="3" height="3" fill="#f0a030"/><rect x="7" y="10.500" width="3" height="3" fill="#f0a030"/><rect x="7" y="16" width="3" height="3" fill="#f0a030"/><path d="M14.500 2 L20.500 9.500 H17 V19.500 H12 V9.500 H8.500 Z" fill="#5b8cc8" stroke="#3b6ca8" stroke-width="0.700"/></svg>
<svg style="left:170px;top:624px" width="18" height="18" viewBox="0 0 22 22"><circle cx="11" cy="11" r="7.500" fill="#6a94cc" stroke="#a8c0e4" stroke-width="0.800"/><text x="11" y="15.500" text-anchor="middle" font-family="Liberation Serif,serif" font-style="italic" font-weight="bold" font-size="12" fill="#fff">i</text></svg>
<svg style="left:939px;top:1051px" width="24" height="24" viewBox="0 0 24 24"><g transform="rotate(-30 10 11)"><rect x="4.500" y="2" width="11" height="17" rx="5" fill="#fff" stroke="#111" stroke-width="2.200"/><path d="M10 2 V9 M4.500 9.500 H15.500" stroke="#111" stroke-width="1.400"/><path d="M7.500 4 V8" stroke="#111" stroke-width="2"/></g><circle cx="14.500" cy="18" r="3.800" fill="#fff" stroke="#111" stroke-width="1.700"/><circle cx="14.500" cy="18" r="1" fill="#111"/><path d="M17 6 L18 5 M19.500 4 L20.500 3 M2 16 L4 16" stroke="#6a2a3a" stroke-width="1.200"/></svg>
<svg style="left:1132px;top:1052px" width="24" height="24" viewBox="0 0 24 24"><path d="M7.500 11.500 V7 C7.500 2 16.500 2 16.500 7 V11.500" fill="none" stroke="#9c9c9c" stroke-width="2.400"/><rect x="4" y="11" width="16" height="10" rx="1.500" fill="#7c7c7c"/></svg>
<svg style="left:1700px;top:1051px" width="24" height="24" viewBox="0 0 24 24"><circle cx="12" cy="12" r="9.500" fill="#fff" stroke="#222" stroke-width="2"/><ellipse cx="12" cy="12" rx="9.500" ry="4" fill="none" stroke="#333" stroke-width="1.200"/><ellipse cx="12" cy="12" rx="4.500" ry="9.500" fill="none" stroke="#333" stroke-width="1.200"/><path d="M12 2.500 V21.500 M2.500 12 H21.500" stroke="#333" stroke-width="1"/></svg>
<svg style="left:1881px;top:1052px" width="24" height="24" viewBox="0 0 24 24"><path d="M3 3 H19 C21 3 22 4.500 22 6 V12 C22 14 20.500 15 19 15 H17 L18 20.500 L11 15 H3 C1.500 15 0.500 14 0.500 12 V6 C0.500 4 1.500 3 3 3 Z" fill="#777"/><circle cx="6" cy="9" r="1.600" fill="#fff"/><circle cx="11.300" cy="9" r="1.600" fill="#fff"/><circle cx="16.600" cy="9" r="1.600" fill="#fff"/></svg>
<div style="left:1841px;top:216px;width:79px;height:830px;background:#f0f0f0;"></div>
<svg style="left:1843px;top:225px" width="42" height="6"><rect width="42" height="6" fill="url(#gp)"/></svg>
<div style="left:1888.5px;top:221.5px;width:14px;height:14px;background:linear-gradient(#fbfbfb,#e8e8e8);border:1px solid #8c8c8c;border-radius:3px;"></div>
<svg style="left:1888.5px;top:221.5px;" width="14" height="14" viewBox="0 0 14 14"><path d="M5.500 3.500 H10.500 V8.500 H5.500 Z M3.500 6.500 H8.500 V10.500 H3.500 Z" fill="#fff" stroke="#000" stroke-width="1"/><path d="M5.500 4 H10.500 M3.500 7 H8.500" stroke="#000" stroke-width="1.6"/></svg>
<div style="left:1904.5px;top:221.5px;width:14px;height:14px;background:linear-gradient(#fbfbfb,#e8e8e8);border:1px solid #8c8c8c;border-radius:3px;"></div>
<svg style="left:1904.5px;top:221.5px;" width="14" height="14" viewBox="0 0 14 14"><path d="M3.500 3.500 L10.500 10.500 M10.500 3.500 L3.500 10.500" stroke="#000" stroke-width="1.500"/></svg>
<div style="left:1820px;top:242px;width:99px;height:26px;background:#fff;border:1px solid #c0c0c0;border-bottom:2px solid #b0b0b0;border-radius:3px;"></div>
<svg style="left:1899px;top:248px;" width="14" height="12" viewBox="0 0 14 12"><path d="M0.500 6 L4.500 1 H13.500 V11 H4.500 Z" fill="#b9b9b9"/><path d="M7 4 L11 8 M11 4 L7 8" stroke="#fff" stroke-width="1.300"/></svg>
<div style="left:1820px;top:269px;width:99px;height:723px;background:#fff;border:1px solid #b4b4b4;"></div>
<div style="left:1820px;top:460px;width:96px;height:20px;background:#ececec;"></div>
<div class="t" style="left:1838px;top:544px;font-size:15px;line-height:19px;height:19px;color:#000;letter-spacing:-0.282px;">ata)</div>
<div style="left:1469px;top:992px;width:451px;height:54px;background:#56a8fd;border:1px solid #3a78c4;"></div>
<div class="t" style="left:1841px;top:999px;font-size:15px;line-height:19px;height:19px;color:#fff;letter-spacing:0.037px;">enti,</div>
<div class="t" style="left:1476px;top:1020px;font-size:15px;line-height:19px;height:19px;color:#0000f0;text-decoration:underline;letter-spacing:0.512px;">abilitando fornitori aggiuntivi.</div>
<div class="t" style="left:1694.5px;top:1020px;font-size:15px;line-height:19px;height:19px;color:#0000f0;text-decoration:underline;letter-spacing:0.496px;">[chiudi]</div>
<div style="left:958px;top:165px;width:884px;height:861px;background:#f0f0f0;box-shadow:0 4px 14px 1px rgba(0,0,0,0.24);outline:1px solid #9b9b9b;outline-offset:-1px;"></div>
<div style="left:959px;top:166px;width:882px;height:37px;background:#fff;"></div>
<svg style="left:969px;top:175px" width="16" height="18" viewBox="0 0 16 18"><ellipse cx="8.800" cy="10.500" rx="5.200" ry="5.800" fill="#f0f5a8" stroke="#b9d233" stroke-width="1.700"/><path d="M9.500 13.500 C11 15.500 13 17 15.500 16.500" fill="none" stroke="#b9d233" stroke-width="2"/><path d="M0.800 9.500 C0.300 4.500 4 1.200 9.500 1.800 L12.500 0.500 L15.500 0.300 L14.200 2.600 L10.500 4.300 C6.500 3.800 4 6 3.500 10.500 Z" fill="#0c0c0c"/><path d="M13.200 1 L15.600 0.200 L14.400 2.400 Z" fill="#3da32b"/><path d="M5.200 8.500 L7 11.300 L11.600 4.500" fill="none" stroke="#2e9a22" stroke-width="1.700"/><path d="M2.800 13.300 L3.600 15 L5.500 15.200 L4 16.300 L4.300 18 L2.800 17 L1.200 17.800 L1.700 16.200 L0.300 15.100 L2.100 15 Z" fill="#1d5a1a"/></svg>
<div class="t" style="left:994px;top:175px;font-size:15px;line-height:19px;height:19px;color:#999;transform:scaleX(0.9441);transform-origin:0 0;">Taglia</div>
<div class="t" style="left:1748px;top:176px;font-size:15px;line-height:19px;height:19px;color:#777;">?</div>
<svg style="left:1803px;top:177px;" width="16" height="16" viewBox="0 0 16 16"><path d="M1.500 1.500 L14 14 M14 1.500 L1.500 14" stroke="#777" stroke-width="1.100"/></svg>
<div style="left:971px;top:242px;width:592px;height:663px;border:1px solid #b8b8b8;border-radius:2px;background:#f0f0f0;"></div>
<div style="left:1068px;top:217px;width:55px;height:26px;border:1px solid #b8b8b8;border-bottom:none;border-radius:3px 3px 0 0;background:linear-gradient(#f4f4f4,#e6e6e6);"></div>
<div class="t" style="left:1084px;top:220px;font-size:15px;line-height:19px;height:19px;color:#000;letter-spacing:-0.014px;">Log</div>
<div style="left:971px;top:214px;width:98px;height:30px;border:1px solid #b8b8b8;border-bottom:none;border-radius:3px 3px 0 0;background:#f0f0f0;"></div>
<div class="t" style="left:985.5px;top:219px;font-size:15px;line-height:19px;height:19px;color:#000;letter-spacing:0.435px;">Parametri</div>
<div class="btn" style="left:1344px;top:215px;width:218px;height:22px;"></div>
<div class="t" style="left:1349px;top:215px;font-size:15px;line-height:19px;height:19px;color:#000;letter-spacing:0.103px;">Esegui come processo batch...</div>
<div class="t" style="left:981px;top:254px;font-size:15px;line-height:19px;height:19px;color:#000;letter-spacing:0.375px;">Vettore in ingresso</div>
<div style="left:981px;top:279px;width:507px;height:30px;border:1px solid #a8a8a8;border-radius:3px;background:linear-gradient(#f7f7f7,#f0f0f0 45%,#dedede);"></div>
<div style="left:1472px;top:281px;width:1px;height:26px;background:#d4d4d4;"></div>
<svg style="left:1476px;top:292px;" width="7" height="5" viewBox="0 0 7 5"><path d="M0 0 H7 L3.500 4 Z" fill="#111"/></svg>
<div class="t" style="left:986px;top:284px;font-size:15px;line-height:19px;height:19px;color:#000;letter-spacing:0.496px;">tratti_ferrovia [EPSG:32632]</div>
<div class="btn" style="left:1490px;top:279px;width:30px;height:30px;"></div>
<div class="t" style="left:1498px;top:284px;font-size:15px;line-height:19px;height:19px;color:#000;letter-spacing:0.749px;">...</div>
<div class="btn" style="left:1522px;top:279px;width:30px;height:30px;"></div>
<svg style="left:1528px;top:285px;" width="17" height="17" viewBox="0 0 17 17"><path d="M4 7.500 A5 5 0 1 1 9.500 13.500" fill="none" stroke="#4e9a3a" stroke-width="3.600"/><path d="M4 7.500 A5 5 0 1 1 9.500 13.500" fill="none" stroke="#8fd07f" stroke-width="2.200"/><path d="M3 12.500 L10 10 L10 17 Z" fill="#6ab85a" stroke="#4e9a3a" stroke-width="0.700"/></svg>
<div class="t" style="left:981px;top:316px;font-size:15px;line-height:19px;height:19px;color:#000;letter-spacing:0.543px;">Vettore di ritaglio</div>
<div style="left:981px;top:341px;width:507px;height:30px;border:1px solid #a8a8a8;border-radius:3px;background:linear-gradient(#f7f7f7,#f0f0f0 45%,#dedede);"></div>
<div style="left:1472px;top:343px;width:1px;height:26px;background:#d4d4d4;"></div>
<svg style="left:1476px;top:354px;" width="7" height="5" viewBox="0 0 7 5"><path d="M0 0 H7 L3.500 4 Z" fill="#111"/></svg>
<div class="t" style="left:986px;top:346px;font-size:15px;line-height:19px;height:19px;color:#000;letter-spacing:0.273px;">prov_lucca [EPSG:3003]</div>
<div class="btn" style="left:1490px;top:341px;width:30px;height:30px;"></div>
<div class="t" style="left:1498px;top:346px;font-size:15px;line-height:19px;height:19px;color:#000;letter-spacing:0.749px;">...</div>
<div class="btn" style="left:1522px;top:341px;width:30px;height:30px;"></div>
<svg style="left:1528px;top:347px;" width="17" height="17" viewBox="0 0 17 17"><path d="M4 7.500 A5 5 0 1 1 9.500 13.500" fill="none" stroke="#4e9a3a" stroke-width="3.600"/><path d="M4 7.500 A5 5 0 1 1 9.500 13.500" fill="none" stroke="#8fd07f" stroke-width="2.200"/><path d="M3 12.500 L10 10 L10 17 Z" fill="#6ab85a" stroke="#4e9a3a" stroke-width="0.700"/></svg>
<div class="t" style="left:981px;top:378px;font-size:15px;line-height:19px;height:19px;color:#000;letter-spacing:0.441px;">Ritagliato</div>
<div style="left:981px;top:403px;width:539px;height:30px;background:#fff;border:1px solid #b0b0b0;border-radius:3px;"></div>
<div class="t" style="left:986px;top:409px;font-size:15px;line-height:19px;height:19px;color:#8a8a8a;letter-spacing:0.447px;">[Create temporary layer]</div>
<div class="btn" style="left:1522px;top:403px;width:30px;height:30px;"></div>
<div class="t" style="left:1530px;top:408px;font-size:15px;line-height:19px;height:19px;color:#000;letter-spacing:0.749px;">...</div>
<div style="left:981px;top:444px;width:16px;height:16px;background:#fff;border:1px solid #9a9a9a;"></div>
<svg style="left:981px;top:444px;" width="16" height="16" viewBox="0 0 16 16"><path d="M4 4 L12 12 M12 4 L4 12" stroke="#000" stroke-width="2.8"/></svg>
<div class="t" style="left:1003px;top:442px;font-size:15px;line-height:19px;height:19px;color:#000;letter-spacing:0.489px;">Apri il risultato dopo l'esecuzione dell'algoritmo</div>
<svg style="left:0;top:0" width="1920" height="1080"><polygon points="1199.0,293.0 1219.5,272.0 1236.0,272.0 1221.8,287.0 1255.0,287.0 1255.0,299.0 1221.8,299.0 1236.0,314.0 1219.5,314.0" fill="#d96244"/></svg>
<svg style="left:0;top:0" width="1920" height="1080"><polygon points="1174.5,357.0 1195.0,336.0 1211.5,336.0 1197.3,351.0 1230.5,351.0 1230.5,363.0 1197.3,363.0 1211.5,378.0 1195.0,378.0" fill="#d96244"/></svg>
<div style="left:1574px;top:215px;width:256px;height:690px;background:#fff;border:1px solid #b4b4b4;border-radius:2px;"></div>
<div class="t" style="left:1580px;top:221px;font-size:24px;line-height:30px;height:30px;color:#444;font-weight:bold;transform:scaleX(0.8494);transform-origin:0 0;">Clip</div>
<div class="t" style="left:1580px;top:264px;font-size:15px;line-height:19px;height:19px;color:#5c5c5c;letter-spacing:0.321px;">This algorithm clips a vector layer</div>
<div class="t" style="left:1580px;top:285px;font-size:15px;line-height:19px;height:19px;color:#5c5c5c;letter-spacing:0.338px;">using the polygons of an additional</div>
<div class="t" style="left:1580px;top:306px;font-size:15px;line-height:19px;height:19px;color:#5c5c5c;letter-spacing:0.335px;">polygons layer. Only the parts of</div>
<div class="t" style="left:1580px;top:327px;font-size:15px;line-height:19px;height:19px;color:#5c5c5c;letter-spacing:0.487px;">the features in the input layer that</div>
<div class="t" style="left:1580px;top:348px;font-size:15px;line-height:19px;height:19px;color:#5c5c5c;letter-spacing:0.464px;">falls within the polygons of the</div>
<div class="t" style="left:1580px;top:369px;font-size:15px;line-height:19px;height:19px;color:#5c5c5c;letter-spacing:0.368px;">clipping layer will be added to the</div>
<div class="t" style="left:1580px;top:390px;font-size:15px;line-height:19px;height:19px;color:#5c5c5c;letter-spacing:0.199px;">resulting layer.</div>
<div class="t" style="left:1580px;top:423px;font-size:15px;line-height:19px;height:19px;color:#5c5c5c;letter-spacing:0.363px;">The attributes of the features are</div>
<div class="t" style="left:1580px;top:444px;font-size:15px;line-height:19px;height:19px;color:#5c5c5c;letter-spacing:0.507px;">not modified, although properties</div>
<div class="t" style="left:1580px;top:465px;font-size:15px;line-height:19px;height:19px;color:#5c5c5c;letter-spacing:0.228px;">such as area or length of the</div>
<div class="t" style="left:1580px;top:486px;font-size:15px;line-height:19px;height:19px;color:#5c5c5c;letter-spacing:0.437px;">features will be modified by the</div>
<div class="t" style="left:1580px;top:507px;font-size:15px;line-height:19px;height:19px;color:#5c5c5c;letter-spacing:0.315px;">clipping operation. If such</div>
<div class="t" style="left:1580px;top:528px;font-size:15px;line-height:19px;height:19px;color:#5c5c5c;letter-spacing:0.359px;">properties are stored as attributes,</div>
<div class="t" style="left:1580px;top:549px;font-size:15px;line-height:19px;height:19px;color:#5c5c5c;letter-spacing:0.446px;">those attributes will have to be</div>
<div class="t" style="left:1580px;top:570px;font-size:15px;line-height:19px;height:19px;color:#5c5c5c;letter-spacing:0.463px;">manually updated.</div>
<div style="left:971px;top:943px;width:859px;height:28px;background:#fff;border:1px solid #8f8f8f;border-radius:3px;"></div>
<div class="t" style="left:1389px;top:947px;font-size:15px;line-height:19px;height:19px;color:#000;font-weight:bold;transform:scaleX(0.9686);transform-origin:0 0;">0%</div>
<div style="left:1634px;top:982px;width:93px;height:32px;border:1px solid #8c8c8c;border-radius:3px;background:linear-gradient(#f6f6f6,#e1e1e1);"></div>
<div class="t" style="left:1666px;top:988px;font-size:15px;line-height:19px;height:19px;color:#000;letter-spacing:-0.259px;">Run</div>
<div class="btn" style="left:1737px;top:982px;width:93px;height:32px;"></div>
<div class="t" style="left:1764px;top:988px;font-size:15px;line-height:19px;height:19px;color:#000;letter-spacing:-0.087px;">Close</div>
<div style="left:1143px;top:510px;width:502px;height:166px;background:#f0f0f0;box-shadow:0 4px 14px 1px rgba(0,0,0,0.24);outline:1px solid #555;outline-offset:-1px;"></div>
<div style="left:1144px;top:511px;width:500px;height:31px;background:#fff;"></div>
<svg style="left:1148px;top:517px" width="15.0588" height="16.9412" viewBox="0 0 16 18"><ellipse cx="8.800" cy="10.500" rx="5.200" ry="5.800" fill="#f0f5a8" stroke="#b9d233" stroke-width="1.700"/><path d="M9.500 13.500 C11 15.500 13 17 15.500 16.500" fill="none" stroke="#b9d233" stroke-width="2"/><path d="M0.800 9.500 C0.300 4.500 4 1.200 9.500 1.800 L12.500 0.500 L15.500 0.300 L14.200 2.600 L10.500 4.300 C6.500 3.800 4 6 3.500 10.500 Z" fill="#0c0c0c"/><path d="M13.200 1 L15.600 0.200 L14.400 2.400 Z" fill="#3da32b"/><path d="M5.200 8.500 L7 11.300 L11.600 4.500" fill="none" stroke="#2e9a22" stroke-width="1.700"/><path d="M2.800 13.300 L3.600 15 L5.500 15.200 L4 16.300 L4.300 18 L2.800 17 L1.200 17.800 L1.700 16.200 L0.300 15.100 L2.100 15 Z" fill="#1d5a1a"/></svg>
<div class="t" style="left:1172px;top:517px;font-size:15px;line-height:19px;height:19px;color:#000;letter-spacing:-0.121px;">SR non corrispondenti</div>
<svg style="left:1616px;top:519px;" width="14" height="14" viewBox="0 0 14 14"><path d="M1 1 L13 13 M13 1 L1 13" stroke="#111" stroke-width="1.200"/></svg>
<svg style="left:1154px;top:552px;" width="40" height="40" viewBox="0 0 40 40"><defs><radialGradient id="qg" cx="40%" cy="30%" r="75%"><stop offset="0" stop-color="#6f97e8"/><stop offset="0.550" stop-color="#2a4fb3"/><stop offset="1" stop-color="#102a7a"/></radialGradient></defs>
<circle cx="20" cy="20" r="18.500" fill="#d7d7d7" stroke="#9a9a9a" stroke-width="1"/><circle cx="20" cy="20" r="16" fill="url(#qg)"/>
<text x="20" y="30" font-family="Liberation Sans, sans-serif" font-weight="bold" font-size="28" fill="#fff" text-anchor="middle">?</text></svg>
<div class="t" style="left:1212px;top:554px;font-size:15px;line-height:19px;height:19px;color:#000;letter-spacing:0.299px;">I layer hanno SR differenti. Questo può causare risultati</div>
<div class="t" style="left:1212px;top:575px;font-size:15px;line-height:19px;height:19px;color:#000;letter-spacing:0.351px;">inattesi.</div>
<div class="t" style="left:1212px;top:596px;font-size:15px;line-height:19px;height:19px;color:#000;letter-spacing:0.305px;">Vuoi continuare lo stesso?</div>
<div class="btn" style="left:1296px;top:632px;width:93px;height:32px;"></div>
<div class="t" style="left:1330.5px;top:638px;font-size:15px;line-height:19px;height:19px;color:#000;transform:scaleX(0.9195);transform-origin:0 0;"><u>Y</u>es</div>
<div style="left:1399px;top:632px;width:93px;height:32px;border:1px solid #4a4a4a;border-radius:3px;background:linear-gradient(#f6f6f6,#e1e1e1);"></div>
<div class="t" style="left:1435px;top:638px;font-size:15px;line-height:19px;height:19px;color:#000;letter-spacing:1.325px;"><u>N</u>o</div>
<svg style="left:0;top:0" width="1920" height="1080"><polygon points="1544.1,611.1 1572.2,611.1 1580.9,619.6 1561.1,620 1587,645.9 1578.9,654.1 1553,628.1 1552.6,647.8 1544.1,639.3" fill="#d96244"/></svg>
</body></html>
